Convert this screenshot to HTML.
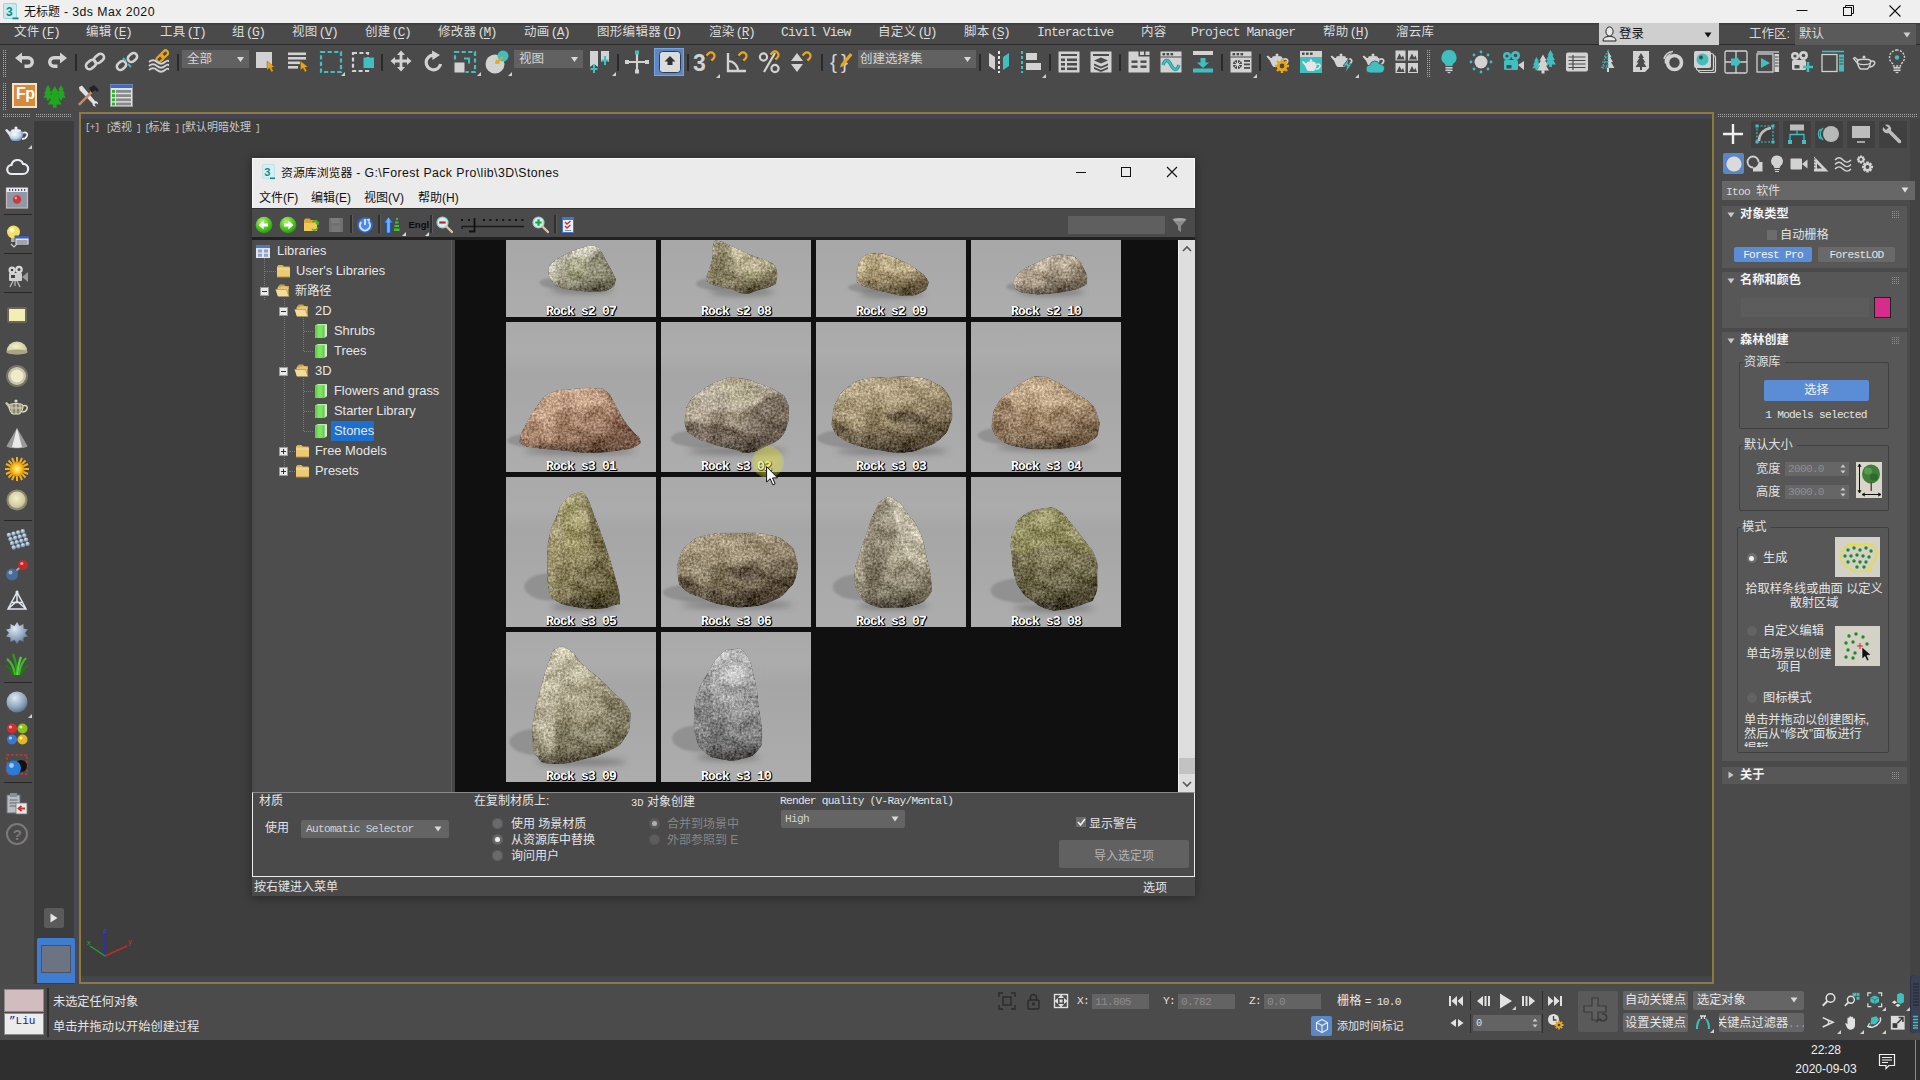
<!DOCTYPE html>
<html lang="zh-CN">
<head>
<meta charset="utf-8">
<title>3ds Max 2020</title>
<style>
*{box-sizing:border-box;margin:0;padding:0}
html,body{width:1920px;height:1080px;overflow:hidden;background:#4a4a4a}
body{position:relative;font-family:"Liberation Sans","Noto Sans CJK SC",sans-serif;font-size:12px;color:#e0e0e0;-webkit-font-smoothing:antialiased}
.a{position:absolute}
.t{position:absolute;white-space:nowrap;line-height:1}
.mono{font-family:"Liberation Mono","Noto Sans CJK SC",monospace}
.cjk{font-family:"Liberation Sans","Noto Sans CJK SC",sans-serif}
svg{position:absolute;overflow:visible}
</style>
</head>
<body>
<!-- main window title bar -->
<div class="a" style="left:0;top:0;width:1920px;height:23px;background:#efefef"></div>
<!-- menu bar -->
<div class="a" style="left:0;top:23px;width:1920px;height:22px;background:linear-gradient(#3c3c3c,#4a4a4a 3px)"></div>
<div class="a" style="left:0;top:44px;width:1920px;height:1px;background:#2a2a2a"></div>
<!-- toolbars -->
<div class="a" style="left:0;top:45px;width:1920px;height:68px;background:#4a4a4a"></div>
<!-- left toolbar -->
<div class="a" style="left:0;top:113px;width:34px;height:871px;background:#4a4a4a"></div>
<div class="a" style="left:34px;top:121px;width:40px;height:863px;background:#3c3c3c"></div>
<div class="a" style="left:74px;top:113px;width:5px;height:871px;background:#49494f"></div>
<!-- viewport -->
<div class="a" style="left:79px;top:112px;width:1635px;height:872px;background:#3e3e3e;border:2px solid #8c7b3c"></div>
<div class="a" style="left:81px;top:114px;width:1631px;height:3px;background:#454259"></div><div class="a" style="left:81px;top:117px;width:1631px;height:2px;background:#3e4a3a"></div>
<div class="a" style="left:81px;top:976px;width:1631px;height:2px;background:#3e4a3a"></div><div class="a" style="left:81px;top:978px;width:1631px;height:4px;background:#454259"></div>
<!-- right panel -->
<div class="a" style="left:1714px;top:112px;width:206px;height:872px;background:#4a4a4a"></div>
<!-- status bar -->
<div class="a" style="left:0;top:984px;width:1920px;height:56px;background:#4b4b4b"></div>
<!-- taskbar -->
<div class="a" style="left:0;top:1040px;width:1920px;height:40px;background:#2f2f2f"></div>
<style>
.mb{font-size:12.500px;color:#dcdcdc}
.mc{font-family:"Liberation Sans","Noto Sans CJK SC",sans-serif;font-size:12.500px;letter-spacing:.300px}
.ml{font-family:"Liberation Mono",monospace;font-size:13px;letter-spacing:-.850px;margin-left:0}
.ml u{text-underline-offset:2px}
.mp{letter-spacing:-1.600px;margin-left:1px}
</style>
<svg width="0" height="0"><defs><pattern id="dots" width="2" height="2" patternUnits="userSpaceOnUse"><rect width="1" height="1" fill="#a8a8a8"/></pattern></defs></svg>
<svg style="left:3px;top:3px" width="17" height="17" viewBox="0 0 17 17"><rect x="0" y="0" width="14" height="16" rx="2" fill="#9fd6da"/><rect x="1" y="1" width="12" height="14" rx="1.500" fill="#c8ecee"/><text x="3" y="12.500" font-family="Liberation Sans,sans-serif" font-weight="bold" font-size="12" fill="#0e8a90">3</text><rect x="9.500" y="14.500" width="6" height="1.800" fill="#0e8a90"/></svg>
<div class="t" style="left:24px;top:6px;font-size:12.300px;color:#111"><span style="font-size:12px">无标题</span><span style="letter-spacing:.45px"> - 3ds Max 2020</span></div>
<svg style="left:1796px;top:5px" width="12" height="12"><path d="M0.500 5.500h11" stroke="#111" stroke-width="1"/></svg>
<svg style="left:1843px;top:5px" width="12" height="12"><rect x="0.500" y="2.500" width="8" height="8" fill="none" stroke="#111"/><path d="M2.500 2.500v-2h8v8h-2" fill="none" stroke="#111"/></svg>
<svg style="left:1889px;top:5px" width="12" height="12"><path d="M0.500 0.500l11 11M11.500 0.500l-11 11" stroke="#111" stroke-width="1.100"/></svg>
<div class="t mb" style="left:14px;top:26px"><span class="mc">文件</span><span class="ml mp">(<u>F</u>)</span></div>
<div class="t mb" style="left:86px;top:26px"><span class="mc">编辑</span><span class="ml mp">(<u>E</u>)</span></div>
<div class="t mb" style="left:160px;top:26px"><span class="mc">工具</span><span class="ml mp">(<u>T</u>)</span></div>
<div class="t mb" style="left:232px;top:26px"><span class="mc">组</span><span class="ml mp">(<u>G</u>)</span></div>
<div class="t mb" style="left:292px;top:26px"><span class="mc">视图</span><span class="ml mp">(<u>V</u>)</span></div>
<div class="t mb" style="left:365px;top:26px"><span class="mc">创建</span><span class="ml mp">(<u>C</u>)</span></div>
<div class="t mb" style="left:438px;top:26px"><span class="mc">修改器</span><span class="ml mp">(<u>M</u>)</span></div>
<div class="t mb" style="left:524px;top:26px"><span class="mc">动画</span><span class="ml mp">(<u>A</u>)</span></div>
<div class="t mb" style="left:597px;top:26px"><span class="mc">图形编辑器</span><span class="ml mp">(<u>D</u>)</span></div>
<div class="t mb" style="left:709px;top:26px"><span class="mc">渲染</span><span class="ml mp">(<u>R</u>)</span></div>
<div class="t mb" style="left:781px;top:26px"><span class="ml">Civil View</span></div>
<div class="t mb" style="left:878px;top:26px"><span class="mc">自定义</span><span class="ml mp">(<u>U</u>)</span></div>
<div class="t mb" style="left:964px;top:26px"><span class="mc">脚本</span><span class="ml mp">(<u>S</u>)</span></div>
<div class="t mb" style="left:1037px;top:26px"><span class="ml">Interactive</span></div>
<div class="t mb" style="left:1141px;top:26px"><span class="mc">内容</span></div>
<div class="t mb" style="left:1191px;top:26px"><span class="ml">Project Manager</span></div>
<div class="t mb" style="left:1323px;top:26px"><span class="mc">帮助</span><span class="ml mp">(<u>H</u>)</span></div>
<div class="t mb" style="left:1396px;top:26px"><span class="mc">溜云库</span></div>
<div class="a" style="left:1599px;top:23px;width:120px;height:22px;background:#cfcfcf"></div>
<svg style="left:1602px;top:26px" width="15" height="16" viewBox="0 0 15 16"><ellipse cx="7.500" cy="5.500" rx="3.600" ry="4.600" fill="#e8e8e8" stroke="#222" stroke-width="1"/><path d="M1 15c0-3.500 3-4.500 6.500-4.500s6.500 1 6.500 4.500Z" fill="#e8e8e8" stroke="#222" stroke-width="1"/></svg>
<div class="t cjk" style="left:1619px;top:28px;font-size:12.500px;color:#111">登录</div>
<svg style="left:1704px;top:32px" width="8" height="6"><path d="M0.500 0.500h7L4 5.500Z" fill="#111"/></svg>
<div class="t cjk" style="left:1749px;top:28px;font-size:12.500px;color:#d8d8d8">工作区:</div>
<div class="a" style="left:1795px;top:24px;width:121px;height:21px;background:#5a5a5a"></div>
<div class="t cjk" style="left:1799px;top:28px;font-size:12.500px;color:#d8d8d8">默认</div>
<svg style="left:1903px;top:32px" width="8" height="6"><path d="M0.500 0.500h7L4 5.500Z" fill="#d0d0d0"/></svg>
<svg style="left:3px;top:50px" width="3" height="27"><rect width="3" height="27" fill="url(#dots)"/></svg>
<svg style="left:3px;top:83px" width="3" height="27"><rect width="3" height="27" fill="url(#dots)"/></svg>
<svg style="left:13.0px;top:50.0px" width="24" height="24" viewBox="0 0 24 24"><path d="M2 8l7-5.500v3.500h6a6 6 0 0 1 0 12h-3.500v-3.500H15a2.500 2.500 0 0 0 0-5H9v4Z" fill="#d2d2d2"/></svg>
<svg style="left:45.0px;top:50.0px" width="24" height="24" viewBox="0 0 24 24"><path d="M22 8l-7-5.500v3.500H9a6 6 0 0 0 0 12h3.500v-3.500H9a2.500 2.500 0 0 1 0-5h6v4Z" fill="#d2d2d2"/></svg>
<div class="a" style="left:75px;top:54px;width:2px;height:17px;background:#2a2a2a"></div>
<svg style="left:83.0px;top:50.0px" width="24" height="24" viewBox="0 0 24 24"><g fill="none" stroke="#d2d2d2" stroke-width="2.600"><rect x="2.500" y="11" width="11" height="7" rx="3.500" transform="rotate(-40 8 14.500)"/><rect x="10.500" y="5" width="11" height="7" rx="3.500" transform="rotate(-40 16 8.500)"/></g></svg>
<svg style="left:115.0px;top:50.0px" width="24" height="24" viewBox="0 0 24 24"><g fill="none" stroke="#d2d2d2" stroke-width="2.600"><rect x="1.500" y="12" width="10" height="7" rx="3.500" transform="rotate(-40 6.500 15.500)"/><rect x="12.500" y="4" width="10" height="7" rx="3.500" transform="rotate(-40 17.500 7.500)"/></g><path d="M8 8l3 3M13 14l3 3" stroke="#3fbfc0" stroke-width="1.800"/></svg>
<svg style="left:147.0px;top:50.0px" width="24" height="24" viewBox="0 0 24 24"><g fill="none" stroke="#e8a51e" stroke-width="2.200"><rect x="9" y="6" width="8" height="5" rx="2.500" transform="rotate(-45 13 8.500)"/><rect x="13.500" y="1.500" width="8" height="5" rx="2.500" transform="rotate(-45 17.500 4)"/></g><g fill="none" stroke="#d2d2d2" stroke-width="2"><path d="M2 12c3-2.500 5-2.500 8 0s5 2.500 8 0 3-1 4-1"/><path d="M2 16c3-2.500 5-2.500 8 0s5 2.500 8 0 3-1 4-1"/><path d="M2 20c3-2.500 5-2.500 8 0s5 2.500 8 0 3-1 4-1"/></g></svg>
<div class="a" style="left:177px;top:54px;width:2px;height:17px;background:#2a2a2a"></div>
<div class="a" style="left:182px;top:50px;width:67px;height:18px;background:#616161"></div><div class="t cjk" style="left:187px;top:53px;font-size:12.500px;color:#d6d6d6">全部</div><svg style="left:237px;top:57px" width="7" height="5"><path d="M0 0h7L3.500 5Z" fill="#d8d8d8"/></svg>
<svg style="left:253.0px;top:50.0px" width="24" height="24" viewBox="0 0 24 24"><rect x="3" y="2" width="16" height="16" fill="#d2d2d2"/><g transform="translate(14,11)"><path d="M0 0l0 9 2.500-2 2 4 1.800-.900-2-3.800 3.200-.300Z" fill="#e8a51e" stroke="#7a5200" stroke-width=".400"/></g></svg>
<svg style="left:286.0px;top:50.0px" width="24" height="24" viewBox="0 0 24 24"><g fill="#d2d2d2"><rect x="2" y="2.500" width="18" height="2.600"/><rect x="2" y="7" width="18" height="2.600"/><rect x="2" y="11.500" width="12" height="2.600"/><rect x="2" y="16" width="10" height="2.600"/></g><g transform="translate(14.500,11)"><path d="M0 0l0 9 2.500-2 2 4 1.800-.900-2-3.800 3.200-.300Z" fill="#e8a51e" stroke="#7a5200" stroke-width=".400"/></g></svg>
<svg style="left:318.5px;top:49.5px" width="24" height="24" viewBox="0 0 24 24"><rect x="2" y="2" width="20" height="20" fill="none" stroke="#3fbfc0" stroke-width="2.200" stroke-dasharray="4.200 2.400"/></svg>
<svg style="left:341px;top:72px" width="4" height="4"><path d="M4 0v4H0Z" fill="#d0d0d0"/></svg>
<svg style="left:351.0px;top:49.5px" width="24" height="24" viewBox="0 0 24 24"><rect x="2" y="3" width="15" height="18" fill="none" stroke="#d2d2d2" stroke-width="2.200" stroke-dasharray="4 2.400"/><rect x="12.500" y="7.500" width="10.500" height="10.500" fill="#3fbfc0"/></svg>
<div class="a" style="left:381px;top:54px;width:2px;height:17px;background:#2a2a2a"></div>
<svg style="left:389.0px;top:49.0px" width="24" height="24" viewBox="0 0 24 24"><path d="M12 1.500l4 4.500h-2.600v4.600H18V8l4.500 4-4.500 4v-2.600h-4.600V18H16l-4 4.500L8 18h2.600v-4.600H6V16l-4.500-4L6 8v2.600h4.600V6H8Z" fill="#d2d2d2"/></svg>
<svg style="left:421.0px;top:50.0px" width="24" height="24" viewBox="0 0 24 24"><path d="M12.500 5.200A7.300 7.300 0 1 0 19.600 14" fill="none" stroke="#d2d2d2" stroke-width="3.200"/><path d="M11 0.500l8 4.500-7.500 5Z" fill="#d2d2d2"/></svg>
<svg style="left:453.0px;top:49.5px" width="24" height="24" viewBox="0 0 24 24"><rect x="2" y="2" width="20" height="20" fill="none" stroke="#3fbfc0" stroke-width="2.200" stroke-dasharray="4.200 2.400"/><rect x="1" y="12" width="11" height="11" fill="#d2d2d2" stroke="#4a4a4a" stroke-width="1"/><path d="M11 8.500h5v5" fill="none" stroke="#3fbfc0" stroke-width="2"/></svg>
<svg style="left:477px;top:72px" width="4" height="4"><path d="M4 0v4H0Z" fill="#d0d0d0"/></svg>
<svg style="left:485.0px;top:50.0px" width="24" height="24" viewBox="0 0 24 24"><circle cx="10" cy="14" r="9.500" fill="#d2d2d2"/><circle cx="18" cy="6" r="5.500" fill="#3fbfc0"/><path d="M10 14l1-5 1.500 1.500L17 6l1.500 1.500-4.500 4.500 1.500 1.500Z" fill="#e8a51e"/></svg>
<svg style="left:508px;top:72px" width="4" height="4"><path d="M4 0v4H0Z" fill="#d0d0d0"/></svg>
<div class="a" style="left:514px;top:50px;width:69px;height:18px;background:#616161"></div><div class="t cjk" style="left:519px;top:53px;font-size:12.500px;color:#d6d6d6">视图</div><svg style="left:571px;top:57px" width="7" height="5"><path d="M0 0h7L3.500 5Z" fill="#d8d8d8"/></svg>
<svg style="left:588.0px;top:50.0px" width="24" height="24" viewBox="0 0 24 24"><path d="M2 1h8v16l-4-3-4 3Z" fill="#d2d2d2"/><path d="M13 1h8v11l-4-3-4 3Z" fill="#d2d2d2"/><path d="M6 14v9M2.500 19h7M17 6v9M13.500 10.500h7" stroke="#3fbfc0" stroke-width="2"/></svg>
<svg style="left:612px;top:72px" width="4" height="4"><path d="M4 0v4H0Z" fill="#d0d0d0"/></svg>
<div class="a" style="left:617px;top:54px;width:2px;height:17px;background:#2a2a2a"></div>
<svg style="left:625.0px;top:50.0px" width="24" height="24" viewBox="0 0 24 24"><path d="M1 12h22M12 4v19" stroke="#d2d2d2" stroke-width="2.200"/><rect x="0" y="10" width="4" height="4" fill="#d2d2d2"/><rect x="20" y="10" width="4" height="4" fill="#d2d2d2"/><rect x="10" y="19.500" width="4" height="4" fill="#d2d2d2"/><rect x="10" y="0.500" width="4" height="4" fill="#3fbfc0"/></svg>
<div class="a" style="left:654px;top:48px;width:30px;height:28px;background:#5b87c6;border:1px solid #7aa4dc"></div>
<svg style="left:657.5px;top:50.0px" width="24" height="24" viewBox="0 0 24 24"><rect x="1.500" y="1.500" width="21" height="21" rx="3" fill="#dcdcdc" stroke="#2f3c50" stroke-width="1"/><path d="M12 6l5.500 5.500h-3V15h-5v-3.500h-3Z" fill="#333"/></svg>
<div class="a" style="left:687px;top:54px;width:2px;height:17px;background:#2a2a2a"></div>
<svg style="left:693.0px;top:50.0px" width="24" height="24" viewBox="0 0 24 24"><text x="0" y="21" font-family="Liberation Sans,sans-serif" font-weight="bold" font-size="23" fill="#d2d2d2">3</text><g transform="translate(13,1)"><g transform="rotate(45 5 5)"><path d="M1.500 9.500V5a3.500 3.500 0 0 1 7 0v4.500" fill="none" stroke="#e8a51e" stroke-width="2.300"/><path d="M0.350 8h2.300v2H0.350ZM7.350 8h2.300v2H7.350Z" fill="#3a3a3a"/></g></g></svg>
<svg style="left:716px;top:74px" width="4" height="4"><path d="M4 0v4H0Z" fill="#d0d0d0"/></svg>
<svg style="left:725.0px;top:50.0px" width="24" height="24" viewBox="0 0 24 24"><path d="M3 3v18h18" fill="none" stroke="#d2d2d2" stroke-width="2.400"/><path d="M3 11a10 10 0 0 1 10 10" fill="none" stroke="#d2d2d2" stroke-width="2.200"/><g transform="translate(13,1)"><g transform="rotate(45 5 5)"><path d="M1.500 9.500V5a3.500 3.500 0 0 1 7 0v4.500" fill="none" stroke="#e8a51e" stroke-width="2.300"/><path d="M0.350 8h2.300v2H0.350ZM7.350 8h2.300v2H7.350Z" fill="#3a3a3a"/></g></g></svg>
<svg style="left:758.0px;top:50.0px" width="24" height="24" viewBox="0 0 24 24"><circle cx="5.500" cy="7" r="3.600" fill="none" stroke="#d2d2d2" stroke-width="2.200"/><circle cx="17" cy="18.500" r="3.600" fill="none" stroke="#d2d2d2" stroke-width="2.200"/><path d="M17 3L6 22" stroke="#d2d2d2" stroke-width="2.200"/><g transform="translate(12,0)"><g transform="rotate(45 5 5)"><path d="M1.500 9.500V5a3.500 3.500 0 0 1 7 0v4.500" fill="none" stroke="#e8a51e" stroke-width="2.300"/><path d="M0.350 8h2.300v2H0.350ZM7.350 8h2.300v2H7.350Z" fill="#3a3a3a"/></g></g></svg>
<svg style="left:789.0px;top:50.0px" width="24" height="24" viewBox="0 0 24 24"><path d="M2 11l6-8 6 8Z" fill="#d2d2d2"/><path d="M2 14l6 8 6-8Z" fill="#d2d2d2"/><g transform="translate(13,1)"><g transform="rotate(45 5 5)"><path d="M1.500 9.500V5a3.500 3.500 0 0 1 7 0v4.500" fill="none" stroke="#e8a51e" stroke-width="2.300"/><path d="M0.350 8h2.300v2H0.350ZM7.350 8h2.300v2H7.350Z" fill="#3a3a3a"/></g></g></svg>
<div class="a" style="left:821px;top:54px;width:2px;height:17px;background:#2a2a2a"></div>
<svg style="left:831.0px;top:50.0px" width="24" height="24" viewBox="0 0 24 24"><text x="-1" y="19" font-family="Liberation Sans,sans-serif" font-size="21" fill="#d2d2d2">{</text><text x="10" y="19" font-family="Liberation Sans,sans-serif" font-size="21" fill="#d2d2d2">}</text><path d="M10 14l9-11 2.500 2-9 11-3.500 1.500Z" fill="#e8a51e"/></svg>
<div class="a" style="left:858px;top:50px;width:118px;height:18px;background:#616161"></div><div class="t cjk" style="left:860px;top:53px;font-size:12.500px;color:#d6d6d6">创建选择集</div><svg style="left:964px;top:57px" width="7" height="5"><path d="M0 0h7L3.500 5Z" fill="#d8d8d8"/></svg>
<div class="a" style="left:979px;top:54px;width:2px;height:17px;background:#2a2a2a"></div>
<svg style="left:987.0px;top:50.0px" width="24" height="24" viewBox="0 0 24 24"><path d="M2 3l6 4v13l-6-4Z" fill="#d2d2d2"/><path d="M22 3l-6 4v13l6-4Z" fill="#3fbfc0"/><path d="M12 1v22" stroke="#e8e8e8" stroke-width="2" stroke-dasharray="3 2"/></svg>
<svg style="left:1019.0px;top:50.0px" width="24" height="24" viewBox="0 0 24 24"><path d="M3 1v22" stroke="#3fbfc0" stroke-width="2" stroke-dasharray="3 2"/><rect x="7" y="3" width="11" height="7" fill="#d2d2d2"/><rect x="7" y="13" width="15" height="7" fill="#d2d2d2"/></svg>
<svg style="left:1042px;top:74px" width="4" height="4"><path d="M4 0v4H0Z" fill="#d0d0d0"/></svg>
<div class="a" style="left:1049px;top:54px;width:2px;height:17px;background:#2a2a2a"></div>
<svg style="left:1057.0px;top:50.0px" width="24" height="24" viewBox="0 0 24 24"><rect x="1.500" y="1.500" width="21" height="21" fill="#d2d2d2"/><g fill="#4a4a4a"><rect x="4" y="4" width="16" height="2"/><rect x="4" y="8.500" width="4" height="2.600"/><rect x="10" y="8.500" width="10" height="2.600"/><rect x="4" y="13" width="4" height="2.600"/><rect x="10" y="13" width="10" height="2.600"/><rect x="4" y="17.500" width="4" height="2.600"/><rect x="10" y="17.500" width="10" height="2.600"/></g></svg>
<svg style="left:1089.0px;top:50.0px" width="24" height="24" viewBox="0 0 24 24"><rect x="1.500" y="1.500" width="21" height="21" fill="#d2d2d2"/><g fill="#4a4a4a"><rect x="4" y="4" width="16" height="2"/><path d="M12 7.500l7 3-7 3-7-3Z"/><path d="M5 13.500l7 3 7-3v2l-7 3-7-3Z"/><path d="M5 17l7 3 7-3v2l-7 3-7-3Z"/></g></svg>
<div class="a" style="left:1119px;top:54px;width:2px;height:17px;background:#2a2a2a"></div>
<svg style="left:1127.0px;top:50.0px" width="24" height="24" viewBox="0 0 24 24"><path d="M1.500 1.500h10v5h11v16h-21Z" fill="#d2d2d2"/><rect x="13" y="1.500" width="4" height="3.500" fill="#d2d2d2"/><rect x="18.500" y="1.500" width="4" height="3.500" fill="#d2d2d2"/><g fill="#4a4a4a"><rect x="4.500" y="10.500" width="6" height="2.400"/><rect x="13.500" y="10.500" width="6" height="2.400"/><rect x="4.500" y="15.500" width="6" height="2.400"/><rect x="13.500" y="15.500" width="6" height="2.400"/></g></svg>
<svg style="left:1159.0px;top:50.0px" width="24" height="24" viewBox="0 0 24 24"><rect x="1.500" y="1.500" width="21" height="21" fill="#d2d2d2"/><g fill="#4a4a4a"><rect x="3.500" y="3" width="2.600" height="2.400"/><rect x="7.500" y="3" width="2.600" height="2.400"/><rect x="11.500" y="3" width="2.600" height="2.400"/><rect x="1.500" y="6.500" width="21" height="1"/></g><path d="M4 15c2-6 5-6 8 0s6 6 8 0" fill="none" stroke="#2a8f90" stroke-width="3.400"/><path d="M4 15c2-6 5-6 8 0s6 6 8 0" fill="none" stroke="#3fbfc0" stroke-width="1.800"/></svg>
<svg style="left:1190.5px;top:50.0px" width="24" height="24" viewBox="0 0 24 24"><rect x="2" y="1" width="20" height="4" fill="#d2d2d2"/><rect x="2" y="18.500" width="20" height="4" fill="#3fbfc0"/><path d="M9.500 8h5v4.500h3.500L12 18l-6-5.500h3.500Z" fill="#3fbfc0"/></svg>
<div class="a" style="left:1221px;top:54px;width:2px;height:17px;background:#2a2a2a"></div>
<svg style="left:1229.0px;top:50.0px" width="24" height="24" viewBox="0 0 24 24"><rect x="1.500" y="1.500" width="21" height="21" fill="#d2d2d2"/><g fill="#4a4a4a"><rect x="3.500" y="3" width="2.600" height="2.400"/><rect x="7.500" y="3" width="2.600" height="2.400"/><rect x="11.500" y="3" width="2.600" height="2.400"/><rect x="1.500" y="6.500" width="21" height="1"/><rect x="15" y="10" width="6" height="1.800"/><rect x="15" y="13.500" width="6" height="1.800"/><rect x="15" y="17" width="6" height="1.800"/></g><circle cx="8.500" cy="14.500" r="4.600" fill="#4a4a4a"/><path d="M5.500 11.500l6 6M11.500 11.500l-6 6M8.500 10v9M4 14.500h9" stroke="#d2d2d2" stroke-width="1"/></svg>
<svg style="left:1253px;top:74px" width="4" height="4"><path d="M4 0v4H0Z" fill="#d0d0d0"/></svg>
<div class="a" style="left:1259px;top:54px;width:2px;height:17px;background:#2a2a2a"></div>
<svg style="left:1266.0px;top:49.0px" width="26" height="26" viewBox="0 0 26 26"><path d="M4.500 9.500c2-1.600 11-1.600 13 0 .600 2.500-1 6.500-3 8.500h-7c-2-2-3.600-6-3-8.500Z" fill="#d2d2d2"/><path d="M5 13L0.500 7.500l1.500-1 4 3.500Z" fill="#d2d2d2"/><path d="M17.500 10.500c3-1.500 5 .500 4 2.500s-3 3-5 3" fill="none" stroke="#d2d2d2" stroke-width="1.700"/><ellipse cx="11" cy="8.300" rx="5" ry="1.300" fill="#d2d2d2"/><circle cx="11" cy="6" r="1.500" fill="#d2d2d2"/><g transform="translate(16,17)"><circle r="5.200" fill="#e8a51e"/><g stroke="#e8a51e" stroke-width="2.400"><path d="M0-7v14M-7 0h14M-5-5l10 10M5-5l-10 10"/></g><circle r="2.400" fill="#4a4a4a"/></g></svg>
<svg style="left:1299.0px;top:50.0px" width="24" height="24" viewBox="0 0 24 24"><rect x="1" y="1" width="22" height="22" fill="#3fbfc0"/><rect x="1" y="1" width="22" height="6" fill="#d2d2d2"/><g fill="#4a4a4a"><rect x="3" y="2.500" width="2.600" height="2.400"/><rect x="7" y="2.500" width="2.600" height="2.400"/><rect x="11" y="2.500" width="2.600" height="2.400"/></g><g transform="translate(2.500,5.500) scale(.860)"><path d="M4.500 9.500c2-1.600 11-1.600 13 0 .600 2.500-1 6.500-3 8.500h-7c-2-2-3.600-6-3-8.500Z" fill="#e6e6e6"/><path d="M5 13L0.500 7.500l1.500-1 4 3.500Z" fill="#e6e6e6"/><path d="M17.500 10.500c3-1.500 5 .500 4 2.500s-3 3-5 3" fill="none" stroke="#e6e6e6" stroke-width="1.700"/><ellipse cx="11" cy="8.300" rx="5" ry="1.300" fill="#e6e6e6"/><circle cx="11" cy="6" r="1.500" fill="#e6e6e6"/></g></svg>
<svg style="left:1330.0px;top:49.0px" width="26" height="26" viewBox="0 0 26 26"><path d="M4.500 9.500c2-1.600 11-1.600 13 0 .600 2.500-1 6.500-3 8.500h-7c-2-2-3.600-6-3-8.500Z" fill="#d2d2d2"/><path d="M5 13L0.500 7.500l1.500-1 4 3.500Z" fill="#d2d2d2"/><path d="M17.500 10.500c3-1.500 5 .500 4 2.500s-3 3-5 3" fill="none" stroke="#d2d2d2" stroke-width="1.700"/><ellipse cx="11" cy="8.300" rx="5" ry="1.300" fill="#d2d2d2"/><circle cx="11" cy="6" r="1.500" fill="#d2d2d2"/><path d="M19 9l-6 8h4l-2 7 7-9h-4Z" fill="#3fbfc0" stroke="#4a4a4a" stroke-width=".800"/></svg>
<svg style="left:1355px;top:74px" width="4" height="4"><path d="M4 0v4H0Z" fill="#d0d0d0"/></svg>
<svg style="left:1362.0px;top:49.0px" width="26" height="26" viewBox="0 0 26 26"><path d="M4.500 9.500c2-1.600 11-1.600 13 0 .600 2.500-1 6.500-3 8.500h-7c-2-2-3.600-6-3-8.500Z" fill="#d2d2d2"/><path d="M5 13L0.500 7.500l1.500-1 4 3.500Z" fill="#d2d2d2"/><path d="M17.500 10.500c3-1.500 5 .500 4 2.500s-3 3-5 3" fill="none" stroke="#d2d2d2" stroke-width="1.700"/><ellipse cx="11" cy="8.300" rx="5" ry="1.300" fill="#d2d2d2"/><circle cx="11" cy="6" r="1.500" fill="#d2d2d2"/><path d="M8 24a4 4 0 0 1 0-8 5 5 0 0 1 9.500-1 4.500 4.500 0 0 1 1 9Z" fill="#3fbfc0" stroke="#4a4a4a" stroke-width=".800"/></svg>
<svg style="left:1395.0px;top:50.0px" width="24" height="24" viewBox="0 0 24 24"><rect x="0.5" y="0.5" width="10" height="10" fill="#d2d2d2"/><path d="M1.5 9.5l3-6 2 4 1.500-2 1.500 4Z" fill="#4a4a4a"/><rect x="13" y="0.5" width="10" height="10" fill="#d2d2d2"/><path d="M14 9.5l3-6 2 4 1.500-2 1.500 4Z" fill="#4a4a4a"/><rect x="0.5" y="13" width="10" height="10" fill="#d2d2d2"/><path d="M1.5 22l3-6 2 4 1.500-2 1.500 4Z" fill="#4a4a4a"/><rect x="13" y="13" width="10" height="10" fill="#d2d2d2"/><path d="M14 22l3-6 2 4 1.500-2 1.500 4Z" fill="#4a4a4a"/></svg>
<svg style="left:1427px;top:50px" width="3" height="27"><rect width="3" height="27" fill="url(#dots)"/></svg>
<svg style="left:1437.0px;top:49.0px" width="24" height="26" viewBox="0 0 24 26"><path d="M12 1a7.500 7.500 0 0 0-4.500 13.500c.800.800 1 1.500 1 2.500h7c0-1 .200-1.700 1-2.500A7.500 7.500 0 0 0 12 1Z" fill="#3fbfc0"/><rect x="8.500" y="18" width="7" height="1.600" fill="#d2d2d2"/><rect x="8.500" y="20.500" width="7" height="1.600" fill="#d2d2d2"/><path d="M10 23h4l-2 1.500Z" fill="#d2d2d2"/></svg>
<svg style="left:1469.0px;top:50.0px" width="24" height="24" viewBox="0 0 24 24"><circle cx="12" cy="12" r="6.500" fill="#d2d2d2"/><g fill="#3fbfc0"><circle cx="12" cy="2" r="1.400"/><circle cx="12" cy="22" r="1.400"/><circle cx="2" cy="12" r="1.400"/><circle cx="22" cy="12" r="1.400"/><circle cx="5" cy="5" r="1.400"/><circle cx="19" cy="5" r="1.400"/><circle cx="5" cy="19" r="1.400"/><circle cx="19" cy="19" r="1.400"/></g></svg>
<svg style="left:1501.0px;top:50.0px" width="24" height="24" viewBox="0 0 24 24"><circle cx="6" cy="6" r="4" fill="#3fbfc0"/><circle cx="14.500" cy="5.500" r="4.500" fill="#3fbfc0"/><circle cx="6" cy="6" r="1.600" fill="#4a4a4a"/><circle cx="14.500" cy="5.500" r="1.800" fill="#4a4a4a"/><rect x="3" y="10" width="14" height="10" rx="1.500" fill="#3fbfc0"/><path d="M17 15l6-4v9Z" fill="#d2d2d2"/><rect x="5.500" y="15" width="5" height="3.500" fill="#4a4a4a"/></svg>
<svg style="left:1533.0px;top:50.0px" width="24" height="24" viewBox="0 0 24 24"><g transform="translate(13,0) scale(0.9)"><path d="M5 0l3.500 6H7l3 5H8l3 5H6.500v3h-3v-3H-1l3-5H0l3-5H1.500Z" fill="#3fbfc0"/></g><g transform="translate(0,7) scale(0.7)"><path d="M5 0l3.500 6H7l3 5H8l3 5H6.500v3h-3v-3H-1l3-5H0l3-5H1.500Z" fill="#3fbfc0"/></g><g transform="translate(5,4.5) scale(1)"><path d="M5 0l3.500 6H7l3 5H8l3 5H6.500v3h-3v-3H-1l3-5H0l3-5H1.500Z" fill="#d2d2d2"/></g></svg>
<svg style="left:1565.0px;top:50.0px" width="24" height="24" viewBox="0 0 24 24"><rect x="1" y="2.500" width="22" height="19" rx="2" fill="#d2d2d2"/><g stroke="#4a4a4a" stroke-width="1.200"><path d="M3.500 7h17M3.500 10.500h17M3.500 14h17M3.500 17.500h17M8 5v15"/></g></svg>
<svg style="left:1596.0px;top:50.0px" width="24" height="24" viewBox="0 0 24 24"><path d="M12 1l3.500 6H14l3 5h-2l3.500 6H12Z" fill="#d2d2d2"/><path d="M12 1L8.500 7H10l-3 5h2L5.500 18H12Z" fill="none" stroke="#3fbfc0" stroke-width="1.200" stroke-dasharray="1.500 1.200"/><g fill="#3fbfc0"><circle cx="10" cy="8" r=".800"/><circle cx="9" cy="12" r=".800"/><circle cx="11" cy="12" r=".800"/><circle cx="8" cy="16" r=".800"/><circle cx="10.500" cy="16" r=".800"/></g><rect x="11" y="18" width="2" height="4" fill="#d2d2d2"/></svg>
<svg style="left:1628.5px;top:50.0px" width="24" height="24" viewBox="0 0 24 24"><path d="M4 1h16v17l-4 4H4Z" fill="#d2d2d2"/><path d="M12 3l3 5h-1.500l3 4.500h-2l3 4.500h-4.500v3h-2v-3H6.500l3-4.500h-2l3-4.500H9Z" fill="#4a4a4a"/></svg>
<svg style="left:1661.5px;top:50.0px" width="24" height="24" viewBox="0 0 24 24"><circle cx="12.500" cy="12.500" r="7" fill="none" stroke="#d2d2d2" stroke-width="3.600"/><path d="M3 14c-1.500-5 2-10 7-11-2.500 2-4 5-4 8Z" fill="#d2d2d2"/><path d="M2 9c1-4 4-7 9-7.500" fill="none" stroke="#d2d2d2" stroke-width="1.600"/></svg>
<svg style="left:1692.5px;top:50.0px" width="24" height="24" viewBox="0 0 24 24"><rect x="5.500" y="5.500" width="17" height="17" rx="2" fill="none" stroke="#d2d2d2" stroke-width="1.200"/><rect x="3.500" y="3.500" width="17" height="17" rx="2" fill="#4a4a4a" stroke="#d2d2d2" stroke-width="1.200"/><rect x="1" y="1" width="17" height="17" rx="2" fill="#d2d2d2"/><circle cx="9.500" cy="9.500" r="6" fill="#3fbfc0"/><circle cx="8" cy="7.500" r="2" fill="#4a4a4a"/></svg>
<svg style="left:1724.0px;top:50.0px" width="24" height="24" viewBox="0 0 24 24"><rect x="1" y="1" width="22" height="22" rx="1.500" fill="none" stroke="#d2d2d2" stroke-width="1.300"/><path d="M12 1v22M1 12h22" stroke="#d2d2d2" stroke-width="1.300"/><path d="M7 8.500h5V6l5 6-5 6v-2.500H7Z" fill="#3fbfc0"/></svg>
<svg style="left:1756.0px;top:50.0px" width="24" height="24" viewBox="0 0 24 24"><rect x="1" y="4" width="16" height="18" fill="none" stroke="#d2d2d2" stroke-width="1.300"/><path d="M1 2h22" stroke="#d2d2d2" stroke-width="1.300"/><path d="M5 8l9 5-9 5Z" fill="#3fbfc0"/><rect x="18.500" y="4" width="4.500" height="18" fill="#d2d2d2"/><path d="M19 7h3.500M19 10h3.500M19 13h3.500M19 16h3.500" stroke="#4a4a4a" stroke-width="1"/></svg>
<svg style="left:1789.0px;top:50.0px" width="24" height="24" viewBox="0 0 24 24"><circle cx="6" cy="6" r="4" fill="#d2d2d2"/><circle cx="14.500" cy="5.500" r="4.500" fill="#d2d2d2"/><circle cx="6" cy="6" r="1.600" fill="#4a4a4a"/><circle cx="14.500" cy="5.500" r="1.800" fill="#4a4a4a"/><rect x="3" y="10" width="14" height="10" rx="1.500" fill="#d2d2d2"/><rect x="5.500" y="15" width="5" height="3.500" fill="#4a4a4a"/><path d="M19 12v10M14 17h10" stroke="#3fbfc0" stroke-width="2.600"/></svg>
<svg style="left:1821.0px;top:50.0px" width="24" height="24" viewBox="0 0 24 24"><path d="M1 1.500h22" stroke="#3fbfc0" stroke-width="1.600"/><rect x="1" y="4.500" width="15" height="17" fill="none" stroke="#d2d2d2" stroke-width="1.300"/><rect x="18" y="4.500" width="5" height="17" fill="#3fbfc0"/><path d="M18.500 8h4M18.500 11h4M18.500 14h4" stroke="#4a4a4a" stroke-width="1"/></svg>
<svg style="left:1853.0px;top:51.0px" width="24" height="22" viewBox="0 0 24 22"><path d="M4.500 9.500c2-1.600 11-1.600 13 0 .600 2.500-1 6.500-3 8.500h-7c-2-2-3.600-6-3-8.500Z" fill="none" stroke="#d2d2d2" stroke-width="1.500"/><path d="M5 13L0.500 7.500l1.500-1 4 3.500" fill="none" stroke="#d2d2d2" stroke-width="1.300"/><path d="M17.500 10.500c3-1.500 5 .500 4 2.500s-3 3-5 3" fill="none" stroke="#d2d2d2" stroke-width="1.500"/><circle cx="11" cy="6" r="1.500" fill="#d2d2d2"/><path d="M5 12.500c3 1.500 9 1.500 12 0" fill="none" stroke="#d2d2d2" stroke-width="1.200"/></svg>
<svg style="left:1885.0px;top:49.0px" width="24" height="26" viewBox="0 0 24 26"><path d="M12 1a7.500 7.500 0 0 0-4.500 13.500c.800.800 1 1.500 1 2.500h7c0-1 .200-1.700 1-2.500A7.500 7.500 0 0 0 12 1Z" fill="none" stroke="#d2d2d2" stroke-width="1.400" stroke-dasharray="2 1.400"/><circle cx="12" cy="8.500" r="2.200" fill="#3fbfc0"/><rect x="8.500" y="18" width="7" height="1.600" fill="#d2d2d2"/><rect x="8.500" y="20.500" width="7" height="1.600" fill="#d2d2d2"/><path d="M10 23h4l-2 1.500Z" fill="#d2d2d2"/></svg>
<div class="a" style="left:12px;top:83px;width:25px;height:25px;background:#d78a3c;border:2px solid #f6e3c8"></div>
<div class="t" style="left:16px;top:86px;font-size:16px;font-weight:bold;color:#fff;font-family:'Liberation Sans',sans-serif;letter-spacing:-.500px">Fp</div>
<svg style="left:43.0px;top:83.0px" width="26" height="26" viewBox="0 0 26 26"><g transform="translate(1,2) scale(0.8)"><path d="M5 0l3.500 6H7l3 5H8l3 5H6.500v3h-3v-3H-1l3-5H0l3-5H1.500Z" fill="#1fa81f"/></g><g transform="translate(14,2) scale(0.8)"><path d="M5 0l3.500 6H7l3 5H8l3 5H6.500v3h-3v-3H-1l3-5H0l3-5H1.500Z" fill="#1fa81f"/></g><g transform="translate(6,3) scale(1.15)"><path d="M5 0l3.500 6H7l3 5H8l3 5H6.500v3h-3v-3H-1l3-5H0l3-5H1.500Z" fill="#1fa81f"/></g></svg>
<svg style="left:76.0px;top:84.0px" width="24" height="24" viewBox="0 0 24 24"><path d="M3 3l3-1.500 13 15.500c2 0 3.500 1.500 3 3.500l-2-1.500-1.500 1.500 1.500 2c-2 .500-3.500-1-3.500-3L3.500 6Z" fill="#e0e0e0"/><path d="M2 20l13-13 1.800 1.800-13 13Z" fill="#c58a6a"/><path d="M13 4l5-3 5 5-2 2-2-2-3 3Z" fill="#222"/></svg>
<svg style="left:109.5px;top:84.0px" width="23" height="23" viewBox="0 0 23 23"><rect x="0.500" y="0.500" width="22" height="22" fill="#e2e2e2" stroke="#9a9a9a"/><rect x="0.500" y="0.500" width="22" height="3.500" fill="#3a6ad0"/><g fill="#8a8a8a"><rect x="6" y="6" width="15" height="2.800"/><rect x="6" y="10.200" width="15" height="2.800"/><rect x="6" y="14.400" width="15" height="2.800"/><rect x="6" y="18.600" width="15" height="2.800"/></g><g fill="#2fb02f"><rect x="2" y="6" width="3" height="2.800"/><rect x="2" y="10.200" width="3" height="2.800"/><rect x="2" y="14.400" width="3" height="2.800"/><rect x="2" y="18.600" width="3" height="2.800"/></g></svg>
<svg style="left:3px;top:114px" width="28" height="3"><rect width="28" height="3" fill="url(#dots)"/></svg>
<svg style="left:36px;top:114px" width="36" height="3"><rect width="36" height="3" fill="url(#dots)"/></svg>
<svg style="left:1718px;top:114px" width="200" height="3"><rect width="200" height="3" fill="url(#dots)"/></svg>
<svg width="0" height="0"><defs><radialGradient id="lgW" cx=".4" cy=".35" r=".7"><stop offset="0" stop-color="#ffffff"/><stop offset=".6" stop-color="#b8cfe6"/><stop offset="1" stop-color="#5f7fa8"/></radialGradient><radialGradient id="lgY" cx=".45" cy=".4" r=".7"><stop offset="0" stop-color="#f4f0c8"/><stop offset=".7" stop-color="#cfcaa0"/><stop offset="1" stop-color="#8a8668"/></radialGradient><radialGradient id="lgB" cx=".4" cy=".3" r=".8"><stop offset="0" stop-color="#dfeaf4"/><stop offset=".6" stop-color="#8aa2ba"/><stop offset="1" stop-color="#4a607a"/></radialGradient><radialGradient id="lgSun" cx=".5" cy=".5" r=".5"><stop offset="0" stop-color="#fff2a0"/><stop offset=".6" stop-color="#f6c21e"/><stop offset="1" stop-color="#d88a08"/></radialGradient></defs></svg>
<svg style="left:4.0px;top:121.0px" width="26" height="26" viewBox="0 0 26 26"><path d="M5 11c2-2 12-2 14 0 .600 3-1 7-3.500 9h-7C6 18 4.400 14 5 11Z" fill="url(#lgW)"/><path d="M5.500 15L1 9l2-1 4 4Z" fill="#dfe9f4"/><path d="M19 12c3-1.500 5 .500 4 3s-3 3-5 3" fill="none" stroke="#e6eef8" stroke-width="1.800"/><ellipse cx="12" cy="9.500" rx="5" ry="1.500" fill="#e8f0fa"/><circle cx="12" cy="7" r="1.600" fill="#e8f0fa"/></svg>
<svg style="left:28px;top:145px" width="4" height="4"><path d="M4 0v4H0Z" fill="#d0d0d0"/></svg>
<svg style="left:4.0px;top:154.0px" width="26" height="26" viewBox="0 0 26 26"><path d="M8 20a4.500 4.500 0 0 1-.500-9 6 6 0 0 1 11.500-1.200 5 5 0 0 1 0 10.200Z" fill="none" stroke="#e8edf4" stroke-width="2.200"/></svg>
<svg style="left:4.0px;top:185.0px" width="26" height="26" viewBox="0 0 26 26"><rect x="2.500" y="3" width="21" height="20" fill="#8f98a8" stroke="#c8b8b8" stroke-width="1.200"/><rect x="2.500" y="3" width="21" height="4" fill="#e8e8ee"/><g fill="#555"><rect x="5" y="4" width="1.200" height="2"/><rect x="8" y="4" width="1.200" height="2"/><rect x="11" y="4" width="1.200" height="2"/><rect x="14" y="4" width="1.200" height="2"/><rect x="17" y="4" width="1.200" height="2"/><rect x="20" y="4" width="1.200" height="2"/></g><circle cx="13" cy="14.500" r="4.200" fill="#c83a3a"/><circle cx="11.800" cy="13" r="1.300" fill="#f0a0a0"/></svg>
<div class="a" style="left:4px;top:214px;width:28px;height:1px;background:#262626"></div>
<svg style="left:4.0px;top:223.0px" width="26" height="26" viewBox="0 0 26 26"><circle cx="9.500" cy="9" r="6.500" fill="#f4e060"/><circle cx="8" cy="7" r="2.500" fill="#fff8c0"/><rect x="7" y="15" width="5" height="4" fill="#b0b0b0"/><rect x="11" y="13" width="14" height="9" fill="#dfe4f0" stroke="#444" stroke-width=".800"/><rect x="11" y="13" width="14" height="2.500" fill="#3a5fc0"/><path d="M12.500 18h11M12.500 20h11" stroke="#666" stroke-width="1"/><path d="M7 21l3 3 3-3" fill="none" stroke="#ccc" stroke-width="1.200"/></svg>
<div class="a" style="left:4px;top:253px;width:28px;height:1px;background:#262626"></div>
<svg style="left:4.0px;top:262.0px" width="26" height="26" viewBox="0 0 26 26"><circle cx="8" cy="8" r="3.500" fill="#d8d8d8"/><circle cx="15" cy="7.500" r="3.800" fill="#d8d8d8"/><circle cx="8" cy="8" r="1.300" fill="#444"/><circle cx="15" cy="7.500" r="1.500" fill="#444"/><rect x="5" y="11" width="13" height="8" rx="1" fill="#d0d0d0"/><path d="M18 15l6-5v10Z" fill="#9a9a9a"/><path d="M9 19l-3 6M13 19l3 6M11 19v5" stroke="#c0c0c0" stroke-width="1.200"/><rect x="7" y="13" width="4" height="3" fill="#444"/></svg>
<div class="a" style="left:4px;top:292px;width:28px;height:1px;background:#262626"></div>
<svg style="left:4.0px;top:302.0px" width="26" height="26" viewBox="0 0 26 26"><rect x="3" y="5" width="20" height="16" rx="2" fill="#6a675a" /><rect x="5" y="7" width="16" height="12" fill="#f2eeb4"/></svg>
<svg style="left:4.0px;top:333.0px" width="26" height="26" viewBox="0 0 26 26"><path d="M2.500 19a10.500 10.500 0 0 1 21 0c0 3-21 3-21 0Z" fill="url(#lgY)"/><ellipse cx="13" cy="19" rx="10.500" ry="2.600" fill="#a8a484"/></svg>
<svg style="left:4.0px;top:363.0px" width="26" height="26" viewBox="0 0 26 26"><circle cx="13" cy="13" r="11" fill="#77746a"/><circle cx="13" cy="13" r="9" fill="#c8c4b0"/><circle cx="13" cy="13" r="6.500" fill="#efebc6"/></svg>
<svg style="left:4.0px;top:395.0px" width="26" height="26" viewBox="0 0 26 26"><path d="M5 10c2-2 12-2 14 0 .600 3-1 7-3.500 9h-7C6 17 4.400 13 5 10Z" fill="#8a8878" stroke="#e8e4c0" stroke-width="1"/><path d="M5.500 14L1 8l2-1 4 4Z" fill="#c8c4a4"/><path d="M19 11c3-1.500 5 .500 4 3s-3 3-5 3" fill="none" stroke="#dcd8b8" stroke-width="1.600"/><circle cx="12" cy="6" r="1.600" fill="#dcd8b8"/><path d="M8 9v10M12 9v10M16 9v10M5 13h14" stroke="#e8e4c0" stroke-width=".800"/></svg>
<svg style="left:4.0px;top:425.0px" width="26" height="26" viewBox="0 0 26 26"><path d="M13 3L2.500 21c0 3 21 3 21 0Z" fill="#9a9a9a"/><path d="M13 3L8 22c2 1 8 1 10 0Z" fill="#e8e8e8"/></svg>
<svg style="left:4.0px;top:456.0px" width="26" height="26" viewBox="0 0 26 26"><g stroke="#f0b020" stroke-width="2"><path d="M13 1v24M1 13h24M4.500 4.500l17 17M21.500 4.500l-17 17M8 2l10 22M18 2L8 24M2 8l22 10M2 18L24 8"/></g><circle cx="13" cy="13" r="7.500" fill="url(#lgSun)"/></svg>
<svg style="left:4.0px;top:487.0px" width="26" height="26" viewBox="0 0 26 26"><circle cx="13" cy="13" r="10.500" fill="#8c8870"/><circle cx="13" cy="13" r="8.500" fill="url(#lgY)"/></svg>
<div class="a" style="left:4px;top:520px;width:28px;height:1px;background:#262626"></div>
<svg style="left:4.0px;top:526.0px" width="26" height="26" viewBox="0 0 26 26"><circle cx="5.0" cy="9.0" r="2.300" fill="url(#lgB)"/><circle cx="9.6" cy="7.8" r="2.300" fill="url(#lgB)"/><circle cx="14.2" cy="6.6" r="2.300" fill="url(#lgB)"/><circle cx="18.8" cy="5.4" r="2.300" fill="url(#lgB)"/><circle cx="6.6" cy="13.2" r="2.300" fill="url(#lgB)"/><circle cx="11.2" cy="12.0" r="2.300" fill="url(#lgB)"/><circle cx="15.8" cy="10.8" r="2.300" fill="url(#lgB)"/><circle cx="20.4" cy="9.6" r="2.300" fill="url(#lgB)"/><circle cx="8.2" cy="17.4" r="2.300" fill="url(#lgB)"/><circle cx="12.8" cy="16.2" r="2.300" fill="url(#lgB)"/><circle cx="17.4" cy="15.0" r="2.300" fill="url(#lgB)"/><circle cx="22.0" cy="13.8" r="2.300" fill="url(#lgB)"/><circle cx="9.8" cy="21.6" r="2.300" fill="url(#lgB)"/><circle cx="14.4" cy="20.4" r="2.300" fill="url(#lgB)"/><circle cx="19.0" cy="19.2" r="2.300" fill="url(#lgB)"/><circle cx="23.6" cy="18.0" r="2.300" fill="url(#lgB)"/></svg>
<svg style="left:4.0px;top:557.0px" width="26" height="26" viewBox="0 0 26 26"><path d="M7 18L19 8" stroke="#aaa" stroke-width="2"/><circle cx="8" cy="17.500" r="6" fill="#4a6a9a"/><circle cx="6.500" cy="15.500" r="2" fill="#9ab4d8"/><circle cx="19" cy="8" r="5" fill="#c02a2a"/><circle cx="17.800" cy="6.500" r="1.600" fill="#f09a9a"/></svg>
<svg style="left:4.0px;top:589.0px" width="26" height="26" viewBox="0 0 26 26"><path d="M13 3L4 20h18ZM13 3v9M4 20l9-8 9 8M7.500 13.500h11" fill="none" stroke="#dfe6f0" stroke-width="1.500"/><circle cx="13" cy="3" r="1.500" fill="#dfe6f0"/></svg>
<svg style="left:4.0px;top:620.0px" width="26" height="26" viewBox="0 0 26 26"><path d="M13 2l2.500 4 4-2 0 4.500 4.500 1-3 3.500 3 3.500-4.500 1 0 4.500-4-2-2.500 4-2.500-4-4 2 0-4.500-4.500-1 3-3.500-3-3.500 4.500-1 0-4.500 4 2Z" fill="url(#lgB)"/></svg>
<svg style="left:4.0px;top:651.0px" width="26" height="26" viewBox="0 0 26 26"><g fill="none" stroke-width="2.200"><path d="M13 24C13 14 11 8 9 3" stroke="#2f9a1a"/><path d="M11 24C10 16 7 11 3 8" stroke="#3fb82a"/><path d="M15 24c1-9 3-13 7-17" stroke="#3fb82a"/><path d="M9 24C8 19 6 16 2 15" stroke="#1f7a10"/><path d="M17 24c1-5 3-8 7-9" stroke="#1f7a10"/><path d="M13 24c1-8 2-13 4-18" stroke="#58d040"/></g></svg>
<div class="a" style="left:4px;top:682px;width:28px;height:1px;background:#262626"></div>
<svg style="left:4.0px;top:689.0px" width="26" height="26" viewBox="0 0 26 26"><circle cx="13" cy="13" r="10.500" fill="url(#lgB)"/></svg>
<svg style="left:28px;top:714px" width="4" height="4"><path d="M4 0v4H0Z" fill="#d0d0d0"/></svg>
<svg style="left:4.0px;top:721.0px" width="26" height="26" viewBox="0 0 26 26"><circle cx="8" cy="7.5" r="5" fill="#d03030"/><circle cx="6.5" cy="6.0" r="1.600" fill="#f8b0b0"/><circle cx="18.5" cy="7.5" r="5" fill="#8ac020"/><circle cx="17.0" cy="6.0" r="1.600" fill="#e0f8a0"/><circle cx="8" cy="18.5" r="5" fill="#3a78d0"/><circle cx="6.5" cy="17.0" r="1.600" fill="#b0d0f8"/><circle cx="18.5" cy="18.5" r="5" fill="#e8b818"/><circle cx="17.0" cy="17.0" r="1.600" fill="#fff0a0"/></svg>
<svg style="left:4.0px;top:752.0px" width="26" height="26" viewBox="0 0 26 26"><rect x="3" y="3" width="20" height="19" fill="none" stroke="#e03030" stroke-width="1.300" stroke-dasharray="2.500 1.800"/><circle cx="17" cy="14" r="6" fill="#111"/><circle cx="9.500" cy="16" r="7.500" fill="#2a7ad8"/><circle cx="7.500" cy="13.500" r="2.400" fill="#9ac8f8"/></svg>
<div class="a" style="left:4px;top:782px;width:28px;height:1px;background:#262626"></div>
<svg style="left:4.0px;top:791.0px" width="26" height="26" viewBox="0 0 26 26"><rect x="3" y="4" width="13" height="18" fill="#b8bcc4" stroke="#6a6e78" stroke-width="1"/><rect x="6" y="2" width="7" height="4" fill="#8a8e98"/><path d="M5.500 9h8M5.500 12h8M5.500 15h8" stroke="#666" stroke-width="1"/><rect x="12" y="12" width="11" height="11" fill="#e8e8e8" stroke="#777" stroke-width=".800"/><path d="M21 17.500h-6M17.500 15l-3 2.500 3 2.500" fill="none" stroke="#d03030" stroke-width="1.800"/></svg>
<svg style="left:4.0px;top:821.0px" width="26" height="26" viewBox="0 0 26 26"><circle cx="13" cy="13" r="10" fill="none" stroke="#7a7a7a" stroke-width="2"/><text x="8.800" y="18.500" font-family="Liberation Sans,sans-serif" font-weight="bold" font-size="15" fill="#7a7a7a">?</text></svg>
<div class="a" style="left:44px;top:908px;width:20px;height:20px;background:#5a5a5a;border-radius:2px"></div>
<svg style="left:50px;top:913px" width="8" height="10"><path d="M0.500 0.500l7 4.500-7 4.500Z" fill="#e4e4e4"/></svg>
<div class="a" style="left:37px;top:938px;width:38px;height:45px;background:#3f7dd0;border-radius:2px 2px 0 0"></div>
<div class="a" style="left:41px;top:945px;width:30px;height:28px;background:#6c7382;border:1px solid #4a5060"></div>
<svg style="left:84px;top:925px" width="50" height="40" viewBox="0 0 50 40"><path d="M21 31V9" stroke="#2a2ad8" stroke-width="1.400"/><path d="M21 31l22-10" stroke="#c82a2a" stroke-width="1.400"/><path d="M21 31L6 21" stroke="#2aa02a" stroke-width="1.400"/><text x="19" y="8" font-size="7" fill="#3a3af0" font-family="Liberation Sans,sans-serif">z</text><text x="3" y="20" font-size="7" fill="#2ab02a" font-family="Liberation Sans,sans-serif">x</text><text x="44" y="19" font-size="7" fill="#d03030" font-family="Liberation Sans,sans-serif">y</text></svg>
<div class="t mono" style="left:85px;top:123px;font-size:9.200px;letter-spacing:-.800px;color:#c8c8c8">[+]</div>
<div class="t" style="left:106px;top:122px;font-size:11px;color:#c8c8c8"><span class="mono" style="font-size:9.200px;letter-spacing:-1.500px">[</span>透视<span class="mono" style="font-size:9.200px;letter-spacing:-1.500px"> ]</span></div>
<div class="t" style="left:144.5px;top:122px;font-size:11px;color:#c8c8c8"><span class="mono" style="font-size:9.200px;letter-spacing:-1.500px">[</span>标准<span class="mono" style="font-size:9.200px;letter-spacing:-1.500px"> ]</span></div>
<div class="t" style="left:181px;top:122px;font-size:11px;color:#c8c8c8"><span class="mono" style="font-size:9.200px;letter-spacing:-1.500px">[</span>默认明暗处理<span class="mono" style="font-size:9.200px;letter-spacing:-1.500px"> ]</span></div>
<div class="a" style="left:1910px;top:119px;width:10px;height:865px;background:#434343;"></div>
<div class="a" style="left:1751px;top:121px;width:28px;height:27px;background:#404040;"></div>
<div class="a" style="left:1783px;top:121px;width:28px;height:27px;background:#404040;"></div>
<div class="a" style="left:1815px;top:121px;width:28px;height:27px;background:#404040;"></div>
<div class="a" style="left:1847px;top:121px;width:28px;height:27px;background:#404040;"></div>
<div class="a" style="left:1879px;top:121px;width:28px;height:27px;background:#404040;"></div>
<svg style="left:1721.0px;top:122.0px" width="24" height="24" viewBox="0 0 24 24"><path d="M12 2v20M2 12h20" stroke="#f0f0f0" stroke-width="2.400"/></svg>
<svg style="left:1753.0px;top:122.0px" width="24" height="24" viewBox="0 0 24 24"><rect x="4" y="4" width="16" height="16" fill="none" stroke="#3fbfc0" stroke-width="1.200" stroke-dasharray="2 1.500"/><g fill="#3fbfc0"><rect x="2.500" y="2.500" width="3" height="3"/><rect x="18.500" y="2.500" width="3" height="3"/><rect x="2.500" y="18.500" width="3" height="3"/><rect x="18.500" y="18.500" width="3" height="3"/></g><path d="M6 19c0-7 5-12 12-13" fill="none" stroke="#bdbdbd" stroke-width="2.600"/></svg>
<svg style="left:1785.0px;top:122.0px" width="24" height="24" viewBox="0 0 24 24"><rect x="5" y="2.500" width="14" height="6" fill="#bdbdbd"/><path d="M12 8.500v4M5 20v-7.500h14V20" fill="none" stroke="#3fbfc0" stroke-width="1.300"/><rect x="3" y="18" width="4" height="4" fill="#3fbfc0"/><rect x="17" y="18" width="4" height="4" fill="#3fbfc0"/></svg>
<svg style="left:1817.0px;top:122.0px" width="24" height="24" viewBox="0 0 24 24"><path d="M6 6a8 8 0 0 0 0 12M3.500 7a7 7 0 0 0 0 10" fill="none" stroke="#3fbfc0" stroke-width="1.300"/><circle cx="14" cy="12" r="8" fill="#b8b8b8"/></svg>
<svg style="left:1849.0px;top:122.0px" width="24" height="24" viewBox="0 0 24 24"><rect x="3" y="4" width="18" height="12" fill="#bdbdbd"/><path d="M8 20h8" stroke="#bdbdbd" stroke-width="1.600"/></svg>
<svg style="left:1881.0px;top:122.0px" width="24" height="24" viewBox="0 0 24 24"><path d="M4 3a4.500 4.500 0 0 1 6 5.500l10 10a1.800 1.800 0 0 1-2.500 2.500l-10-10A4.500 4.500 0 0 1 2 5l3 3 2.500-2.500Z" fill="#bdbdbd"/></svg>
<div class="a" style="left:1723px;top:153px;width:21px;height:21px;background:#5b87c6;border-radius:2px"></div>
<svg style="left:1723.5px;top:153.5px" width="20" height="20" viewBox="0 0 20 20"><circle cx="10" cy="10" r="7.600" fill="#dadada"/></svg>
<svg style="left:1745.0px;top:153.5px" width="20" height="20" viewBox="0 0 20 20"><circle cx="8" cy="8" r="5.500" fill="none" stroke="#d2d2d2" stroke-width="1.800"/><rect x="8" y="8" width="9.500" height="9.500" fill="#d2d2d2"/><path d="M8 8h5.500a5.500 5.500 0 0 1-5.500 5.500Z" fill="#4a4a4a"/></svg>
<svg style="left:1767.0px;top:153.5px" width="20" height="20" viewBox="0 0 20 20"><path d="M10 1.500a5.800 5.800 0 0 0-3.500 10.500c.600.600.800 1.200.800 2h5.400c0-.800.200-1.400.800-2A5.800 5.800 0 0 0 10 1.500Z" fill="#d2d2d2"/><path d="M7.500 15.500h5M8 17.500h4" stroke="#d2d2d2" stroke-width="1.200"/></svg>
<svg style="left:1789.0px;top:153.5px" width="20" height="20" viewBox="0 0 20 20"><rect x="1.500" y="4.500" width="11.500" height="11" rx="1" fill="#d2d2d2"/><path d="M13 10l5.500-4.500v9Z" fill="#d2d2d2"/></svg>
<svg style="left:1811.0px;top:153.5px" width="20" height="20" viewBox="0 0 20 20"><path d="M3 2.500v15h14.500Z" fill="#d2d2d2"/><path d="M6 9.500v5h5Z" fill="#4a4a4a"/><path d="M3 5h1.500M3 8h1.500M3 11h1.500M3 14h1.500" stroke="#444" stroke-width="1"/></svg>
<svg style="left:1833.0px;top:153.5px" width="20" height="20" viewBox="0 0 20 20"><g fill="none" stroke="#d2d2d2" stroke-width="1.600"><path d="M2 6c3-3 5-3 8 0s5 3 8 0"/><path d="M2 10.500c3-3 5-3 8 0s5 3 8 0"/><path d="M2 15c3-3 5-3 8 0s5 3 8 0"/></g></svg>
<svg style="left:1855.0px;top:153.5px" width="20" height="20" viewBox="0 0 20 20"><g transform="translate(6,5.5)"><g stroke="#d2d2d2" stroke-width="2.0"><path d="M0-4.1V4.1M-4.1 0H4.1M-2.8-2.8L2.8 2.8M2.8-2.8L-2.8 2.8"/></g><circle r="2.8" fill="#d2d2d2"/><circle r="1.4" fill="#4a4a4a"/></g><g transform="translate(12.5,13)"><g stroke="#d2d2d2" stroke-width="2.7"><path d="M0-5.5V5.5M-5.5 0H5.5M-3.8-3.8L3.8 3.8M3.8-3.8L-3.8 3.8"/></g><circle r="3.8" fill="#d2d2d2"/><circle r="1.9" fill="#4a4a4a"/></g></svg>
<div class="a" style="left:1722px;top:181px;width:193px;height:19px;background:#676767;"></div>
<div class="t cjk" style="left:1726px;top:185px;color:#dcdcdc"><span class="mono" style="font-size:11.2px;letter-spacing:-.74px">Itoo </span><span style="font-size:12.200px">软件</span></div>
<svg style="left:1901px;top:187px" width="8" height="6"><path d="M0.500 0.500h7L4 5.500Z" fill="#e0e0e0"/></svg>
<div class="a" style="left:1722px;top:206px;width:185px;height:62px;background:#575757;"></div><svg style="left:1727px;top:212px" width="8" height="6"><path d="M0.500 0.500h7L4 5.500Z" fill="#c8c8c8"/></svg><div class="t cjk" style="left:1740px;top:208px;font-size:12.200px;font-weight:bold;color:#f2f2f2">对象类型</div><svg style="left:1892px;top:211px" width="7" height="7"><rect width="7" height="7" fill="url(#dots)" opacity=".7"/></svg>
<div class="a" style="left:1767px;top:230px;width:10px;height:10px;background:#6c6c6c;"></div>
<div class="t cjk" style="left:1780px;top:229px;font-size:12.200px;color:#e0e0e0">自动栅格</div>
<div class="a" style="left:1734px;top:247px;width:78px;height:15px;background:#5b8cd6;border-radius:2px"></div>
<div class="t mono" style="left:1734px;top:250px;width:78px;text-align:center;font-size:11.2px;color:#f4f4f4;letter-spacing:-.74px">Forest Pro</div>
<div class="a" style="left:1818px;top:247px;width:77px;height:15px;background:#696969;border-radius:2px"></div>
<div class="t mono" style="left:1818px;top:250px;width:77px;text-align:center;font-size:11.2px;color:#e4e4e4;letter-spacing:-.74px">ForestLOD</div>
<div class="a" style="left:1722px;top:272px;width:185px;height:56px;background:#575757;"></div><svg style="left:1727px;top:278px" width="8" height="6"><path d="M0.500 0.500h7L4 5.500Z" fill="#c8c8c8"/></svg><div class="t cjk" style="left:1740px;top:274px;font-size:12.200px;font-weight:bold;color:#f2f2f2">名称和颜色</div><svg style="left:1892px;top:277px" width="7" height="7"><rect width="7" height="7" fill="url(#dots)" opacity=".7"/></svg>
<div class="a" style="left:1741px;top:298px;width:128px;height:19px;background:#5c5c5c;"></div>
<div class="a" style="left:1874px;top:297px;width:17px;height:21px;background:#d62c8a;border:1px solid #222"></div>
<div class="a" style="left:1722px;top:332px;width:185px;height:429px;background:#575757;"></div><svg style="left:1727px;top:338px" width="8" height="6"><path d="M0.500 0.500h7L4 5.500Z" fill="#c8c8c8"/></svg><div class="t cjk" style="left:1740px;top:334px;font-size:12.200px;font-weight:bold;color:#f2f2f2">森林创建</div><svg style="left:1892px;top:337px" width="7" height="7"><rect width="7" height="7" fill="url(#dots)" opacity=".7"/></svg>
<div class="a" style="left:1739px;top:362px;width:150px;height:67px;border:1px solid #404040;border-radius:2px"></div><div class="a" style="left:1743px;top:356px;width:42px;height:12px;background:#575757;"></div><div class="t cjk" style="left:1744px;top:356px;font-size:12.200px;color:#e0e0e0">资源库</div>
<div class="a" style="left:1764px;top:380px;width:105px;height:21px;background:#5b8cd6;border-radius:2px"></div>
<div class="t cjk" style="left:1764px;top:384px;width:105px;text-align:center;font-size:12.200px;color:#f4f4f4">选择</div>
<div class="t mono" style="left:1744px;top:410px;width:144px;text-align:center;font-size:11.2px;color:#e4e4e4;letter-spacing:-.74px">1 Models selected</div>
<div class="a" style="left:1739px;top:445px;width:150px;height:66px;border:1px solid #404040;border-radius:2px"></div><div class="a" style="left:1743px;top:439px;width:54px;height:12px;background:#575757;"></div><div class="t cjk" style="left:1744px;top:439px;font-size:12.200px;color:#e0e0e0">默认大小</div>
<div class="t cjk" style="left:1756px;top:463px;font-size:12.200px;color:#e0e0e0">宽度</div>
<div class="a" style="left:1785px;top:462px;width:64px;height:14px;background:#666666;"></div>
<div class="t mono" style="left:1788px;top:464px;font-size:11.2px;color:#8e8e8e;letter-spacing:-.74px">2000.0</div>
<svg style="left:1840px;top:464px" width="6" height="10"><path d="M0.500 3.500h5L3 0.500ZM0.500 6.500h5L3 9.500Z" fill="#c8c8c8"/></svg>
<div class="t cjk" style="left:1756px;top:486px;font-size:12.200px;color:#e0e0e0">高度</div>
<div class="a" style="left:1785px;top:485px;width:64px;height:14px;background:#666666;"></div>
<div class="t mono" style="left:1788px;top:487px;font-size:11.2px;color:#8e8e8e;letter-spacing:-.74px">3000.0</div>
<svg style="left:1840px;top:487px" width="6" height="10"><path d="M0.500 3.500h5L3 0.500ZM0.500 6.500h5L3 9.500Z" fill="#c8c8c8"/></svg>
<div class="a" style="left:1856px;top:462px;width:26px;height:36px;background:#d8d5cb;"></div>
<svg style="left:1856px;top:462px" width="26" height="36" viewBox="0 0 26 36"><ellipse cx="15" cy="12" rx="9" ry="9.500" fill="#3f7f3a"/><ellipse cx="12" cy="9" rx="4" ry="3.500" fill="#5a9a50"/><ellipse cx="18" cy="15" rx="4" ry="3.500" fill="#2f6a2c"/><path d="M14.500 20v9h1.500v-9Z" fill="#6a4a2a"/><path d="M3.500 3v27M2 5l1.500-3L5 5M2 28l1.500 3L5 28" fill="none" stroke="#111" stroke-width="1"/><path d="M7 32.500h17M9 31l-3 1.500 3 1.500M22 31l3 1.500-3 1.500" fill="none" stroke="#111" stroke-width="1"/></svg>
<div class="a" style="left:1737px;top:527px;width:152px;height:226px;border:1px solid #404040;border-radius:2px"></div><div class="a" style="left:1741px;top:521px;width:30px;height:12px;background:#575757;"></div><div class="t cjk" style="left:1742px;top:521px;font-size:12.200px;color:#e0e0e0">模式</div>
<div class="a" style="left:1746.5px;top:553px;width:10px;height:10px;border-radius:50%;background:#707070"></div><div class="a" style="left:1749.0px;top:555.5px;width:5px;height:5px;border-radius:50%;background:#f0f0f0"></div>
<div class="t cjk" style="left:1763px;top:552px;font-size:12.200px;color:#e4e4e4">生成</div>
<div class="a" style="left:1835px;top:537px;width:45px;height:40px;background:#d4d1c6;"></div>
<svg style="left:1835px;top:537px" width="45" height="40" viewBox="0 0 45 40"><path d="M7 15c2-7 10-9 18-7 7-3 15 0 16 6 2 6-2 12-6 15 3 4-2 6-7 5-6 2-12 0-13-3C8 30 4 22 7 15Z" fill="none" stroke="#e8e020" stroke-width="1.300"/><circle cx="13" cy="13" r="1.700" fill="#1f8a2a"/><circle cx="19" cy="11" r="1.700" fill="#1f8a2a"/><circle cx="25" cy="13" r="1.700" fill="#1f8a2a"/><circle cx="31" cy="11" r="1.700" fill="#1f8a2a"/><circle cx="36" cy="14" r="1.700" fill="#1f8a2a"/><circle cx="10" cy="19" r="1.700" fill="#1f8a2a"/><circle cx="16" cy="19" r="1.700" fill="#1f8a2a"/><circle cx="22" cy="18" r="1.700" fill="#1f8a2a"/><circle cx="28" cy="19" r="1.700" fill="#1f8a2a"/><circle cx="34" cy="20" r="1.700" fill="#1f8a2a"/><circle cx="13" cy="25" r="1.700" fill="#1f8a2a"/><circle cx="19" cy="24" r="1.700" fill="#1f8a2a"/><circle cx="25" cy="25" r="1.700" fill="#1f8a2a"/><circle cx="31" cy="25" r="1.700" fill="#1f8a2a"/><circle cx="22" cy="30" r="1.700" fill="#1f8a2a"/><circle cx="29" cy="30" r="1.700" fill="#1f8a2a"/></svg>
<div class="t cjk" style="left:1739px;top:583px;width:150px;text-align:center;font-size:12.200px;color:#e4e4e4">拾取样条线或曲面 以定义</div>
<div class="t cjk" style="left:1739px;top:597px;width:150px;text-align:center;font-size:12.200px;color:#e4e4e4">散射区域</div>
<div class="a" style="left:1746.5px;top:626px;width:10px;height:10px;border-radius:50%;background:#636363"></div>
<div class="t cjk" style="left:1763px;top:625px;font-size:12.200px;color:#e4e4e4">自定义编辑</div>
<div class="t cjk" style="left:1744px;top:648px;width:90px;text-align:center;font-size:12.200px;color:#e4e4e4">单击场景以创建</div>
<div class="t cjk" style="left:1744px;top:661px;width:90px;text-align:center;font-size:12.200px;color:#e4e4e4">项目</div>
<div class="a" style="left:1835px;top:626px;width:45px;height:40px;background:#d4d1c6;"></div>
<svg style="left:1835px;top:626px" width="45" height="40" viewBox="0 0 45 40"><circle cx="14" cy="10" r="1.700" fill="#1f8a2a"/><circle cx="21" cy="8" r="1.700" fill="#1f8a2a"/><circle cx="28" cy="11" r="1.700" fill="#1f8a2a"/><circle cx="11" cy="17" r="1.700" fill="#1f8a2a"/><circle cx="18" cy="16" r="1.700" fill="#1f8a2a"/><circle cx="32" cy="18" r="1.700" fill="#1f8a2a"/><circle cx="13" cy="24" r="1.700" fill="#1f8a2a"/><circle cx="20" cy="27" r="1.700" fill="#1f8a2a"/><circle cx="11" cy="31" r="1.700" fill="#1f8a2a"/><circle cx="18" cy="32" r="1.700" fill="#1f8a2a"/><path d="M22 20h6M25 17v6" stroke="#e02020" stroke-width="1"/><path d="M27 21v12l3-2.500 2 4.500 2-1-2-4.500 4-.500Z" fill="#111" stroke="#fff" stroke-width=".500"/></svg>
<div class="a" style="left:1746.5px;top:692.5px;width:10px;height:10px;border-radius:50%;background:#636363"></div>
<div class="t cjk" style="left:1763px;top:692px;font-size:12.200px;color:#e4e4e4">图标模式</div>
<div class="t cjk" style="left:1744px;top:714px;font-size:12.200px;color:#e4e4e4">单击并拖动以创建图标,</div>
<div class="t cjk" style="left:1744px;top:728px;font-size:12.200px;color:#e4e4e4">然后从“修改”面板进行</div>
<div class="a" style="left:1744px;top:742px;width:60px;height:5px;overflow:hidden"><div class="t cjk" style="left:0;top:0;font-size:12.200px;color:#e4e4e4">编辑</div></div>
<div class="a" style="left:1722px;top:767px;width:185px;height:17px;background:#575757;"></div><svg style="left:1728px;top:771px" width="6" height="8"><path d="M0.500 0.500v7L5.500 4Z" fill="#c8c8c8"/></svg><div class="t cjk" style="left:1740px;top:769px;font-size:12.200px;font-weight:bold;color:#f2f2f2">关于</div><svg style="left:1892px;top:772px" width="7" height="7"><rect width="7" height="7" fill="url(#dots)" opacity=".7"/></svg>
<div class="a" style="left:4px;top:989px;width:40px;height:23px;background:#d3bcc0;border:1px solid #8a8a8a"></div>
<div class="a" style="left:4px;top:1013px;width:40px;height:22px;background:#ececec;border:1px solid #8a8a8a"></div>
<div class="t " style="left:9px;top:1016px;font-size:11px;color:#1a1a8a;font-family:'Liberation Mono',monospace;width:33px;overflow:hidden">”Liu</div>
<div class="a" style="left:47px;top:988px;width:2px;height:49px;background:#2e2e2e;"></div>
<div class="t cjk" style="left:53px;top:996px;font-size:12.200px;color:#e6e6e6">未选定任何对象</div>
<div class="t cjk" style="left:53px;top:1021px;font-size:12.200px;color:#e6e6e6">单击并拖动以开始创建过程</div>
<svg style="left:998.0px;top:992.0px" width="18" height="18" viewBox="0 0 18 18"><rect x="5" y="5" width="8" height="8" fill="none" stroke="#2b2b2b" stroke-width="1.400"/><path d="M1 5V1h4M13 1h4v4M17 13v4h-4M5 17H1v-4" fill="none" stroke="#2b2b2b" stroke-width="1.400"/></svg>
<svg style="left:1025.0px;top:992.0px" width="18" height="18" viewBox="0 0 18 18"><rect x="3" y="8" width="11" height="9" rx="1" fill="none" stroke="#2b2b2b" stroke-width="1.400"/><path d="M5.500 8V5.500a3 3 0 0 1 6 0V8" fill="none" stroke="#2b2b2b" stroke-width="1.400"/><circle cx="8.500" cy="12" r="1.500" fill="#2b2b2b"/></svg>
<svg style="left:1053.0px;top:993.0px" width="16" height="16" viewBox="0 0 16 16"><rect x="1.500" y="1.500" width="13" height="13" fill="none" stroke="#e0e0e0" stroke-width="1.400"/><path d="M8 1.500l3 3.500H5ZM8 14.500l3-3.500H5ZM1.500 8l3.500-3v6ZM14.500 8L11 5v6Z" fill="#e0e0e0"/><rect x="6.500" y="6.500" width="3" height="3" fill="#e0e0e0"/></svg>
<div class="t mono" style="left:1077px;top:996px;font-size:11.2px;letter-spacing:-.74px;color:#e0e0e0">X:</div>
<div class="a" style="left:1092px;top:994px;width:57px;height:15px;background:#636363;"></div>
<div class="t mono" style="left:1095px;top:997px;font-size:11.2px;color:#8c8c8c;letter-spacing:-.74px">11.805</div>
<div class="t mono" style="left:1163px;top:996px;font-size:11.2px;letter-spacing:-.74px;color:#e0e0e0">Y:</div>
<div class="a" style="left:1178px;top:994px;width:57px;height:15px;background:#636363;"></div>
<div class="t mono" style="left:1181px;top:997px;font-size:11.2px;color:#8c8c8c;letter-spacing:-.74px">0.782</div>
<div class="t mono" style="left:1249px;top:996px;font-size:11.2px;letter-spacing:-.74px;color:#e0e0e0">Z:</div>
<div class="a" style="left:1264px;top:994px;width:57px;height:15px;background:#636363;"></div>
<div class="t mono" style="left:1267px;top:997px;font-size:11.2px;color:#8c8c8c;letter-spacing:-.74px">0.0</div>
<div class="t cjk" style="left:1337px;top:995px;font-size:12.200px;color:#e6e6e6">栅格 <span class="mono" style="font-size:11.2px;letter-spacing:-.74px">= 10.0</span></div>
<div class="a" style="left:1311px;top:1016px;width:21px;height:20px;background:#5b87c6;border-radius:2px"></div>
<svg style="left:1313.5px;top:1018.0px" width="16" height="16" viewBox="0 0 16 16"><path d="M8 1.500l5.500 3v7L8 14.500l-5.500-3v-7Z" fill="none" stroke="#e8e8e8" stroke-width="1.200"/><path d="M2.500 4.500L8 7.500l5.500-3M8 7.500v7" fill="none" stroke="#e8e8e8" stroke-width="1.200"/></svg>
<div class="t cjk" style="left:1337px;top:1021px;font-size:11.100px;color:#e6e6e6">添加时间标记</div>
<svg style="left:1448.0px;top:993.0px" width="16" height="16" viewBox="0 0 16 16"><rect x="1" y="3" width="2" height="10" fill="#e2e2e2"/><path d="M9 3v10L3.500 8ZM15 3v10L9.500 8Z" fill="#e2e2e2"/></svg>
<div class="a" style="left:1470px;top:991px;width:1px;height:19px;background:#2e2e2e;"></div>
<svg style="left:1476.0px;top:993.0px" width="16" height="16" viewBox="0 0 16 16"><path d="M7 3v10L1 8Z" fill="#e2e2e2"/><rect x="8.500" y="3" width="2" height="10" fill="#e2e2e2"/><rect x="12" y="3" width="2" height="10" fill="#e2e2e2"/></svg>
<svg style="left:1498.0px;top:993.0px" width="16" height="16" viewBox="0 0 16 16"><path d="M2 0.500v15L14 8Z" fill="#e2e2e2"/></svg>
<svg style="left:1512px;top:1006px" width="4" height="4"><path d="M4 0v4H0Z" fill="#d0d0d0"/></svg>
<svg style="left:1520.0px;top:993.0px" width="16" height="16" viewBox="0 0 16 16"><rect x="2" y="3" width="2" height="10" fill="#e2e2e2"/><rect x="5.500" y="3" width="2" height="10" fill="#e2e2e2"/><path d="M9 3v10l6-5Z" fill="#e2e2e2"/></svg>
<div class="a" style="left:1542px;top:991px;width:1px;height:19px;background:#2e2e2e;"></div>
<svg style="left:1547.0px;top:993.0px" width="16" height="16" viewBox="0 0 16 16"><path d="M1 3v10l5.500-5ZM7 3v10l5.500-5Z" fill="#e2e2e2"/><rect x="13" y="3" width="2" height="10" fill="#e2e2e2"/></svg>
<svg style="left:1449.0px;top:1016.0px" width="16" height="14" viewBox="0 0 16 14"><path d="M7 3v8L1.500 7ZM9 3v8l5.500-4Z" fill="#e2e2e2"/></svg>
<div class="a" style="left:1470px;top:1014px;width:1px;height:19px;background:#2e2e2e;"></div>
<div class="a" style="left:1473px;top:1015px;width:68px;height:16px;background:#636363;"></div>
<div class="t mono" style="left:1476px;top:1018px;font-size:10.400px;color:#e0e0e0">0</div>
<svg style="left:1532px;top:1018px" width="6" height="10"><path d="M0.500 3.500h5L3 0.500ZM0.500 6.500h5L3 9.500Z" fill="#c8c8c8"/></svg>
<div class="a" style="left:1542px;top:1014px;width:1px;height:19px;background:#2e2e2e;"></div>
<svg style="left:1547.0px;top:1013.0px" width="18" height="18" viewBox="0 0 18 18"><circle cx="6.500" cy="6.500" r="5.500" fill="#e0e0e0"/><path d="M6.500 3v4h3" fill="none" stroke="#444" stroke-width="1.300"/><g transform="translate(12,12)"><g stroke="#e8a51e" stroke-width="1.800"><path d="M0-4.500V4.500M-4.500 0H4.500M-3.200-3.200L3.200 3.200M3.200-3.200L-3.200 3.200"/></g><circle r="3" fill="#e8a51e"/><circle r="1.300" fill="#444"/></g></svg>
<div class="a" style="left:1578px;top:991px;width:40px;height:41px;background:#5a5a5a;border-radius:2px"></div>
<svg style="left:1582px;top:995px" width="32" height="32" viewBox="0 0 32 32"><path d="M10 3h6v8h8v6h-8v8h-6v-8H2v-6h8Z" fill="#5f5f5f" stroke="#3a3a3a" stroke-width="1.200"/><g transform="translate(21,22)"><path d="M-1-3a3.500 3.500 0 1 1-2 5l-4 3" fill="none" stroke="#3a3a3a" stroke-width="1.600"/></g></svg>
<div class="a" style="left:1623px;top:991px;width:65px;height:19px;background:#656565;border-radius:2px"></div>
<div class="t cjk" style="left:1623px;top:994px;width:65px;text-align:center;font-size:12.200px;color:#e6e6e6">自动关键点</div>
<div class="a" style="left:1623px;top:1013px;width:65px;height:19px;background:#656565;border-radius:2px"></div>
<div class="t cjk" style="left:1623px;top:1017px;width:65px;text-align:center;font-size:12.200px;color:#e6e6e6">设置关键点</div>
<div class="a" style="left:1693px;top:991px;width:111px;height:19px;background:#656565;border-radius:2px"></div>
<div class="t cjk" style="left:1697px;top:994px;font-size:12.200px;color:#e6e6e6">选定对象</div>
<svg style="left:1790px;top:997px" width="8" height="6"><path d="M0.500 0.500h7L4 5.500Z" fill="#d8d8d8"/></svg>
<svg style="left:1694.0px;top:1013.0px" width="18" height="18" viewBox="0 0 18 18"><path d="M3 16c0-5 1-8 3-10M15 16c0-5-1-8-3-10" fill="none" stroke="#3fbfc0" stroke-width="2"/><path d="M6 3h6M7.500 3v3M10.500 3v3" stroke="#e0e0e0" stroke-width="1.400"/></svg>
<svg style="left:1710px;top:1029px" width="4" height="4"><path d="M4 0v4H0Z" fill="#d0d0d0"/></svg>
<div class="a" style="left:1719px;top:1013px;width:85px;height:19px;background:#656565;border-radius:2px"></div>
<div class="a" style="left:1719px;top:1013px;width:85px;height:19px;overflow:hidden"><div class="t cjk" style="left:-4px;top:4px;font-size:12.200px;color:#e6e6e6">关键点过滤器<span class="mono" style="font-size:10px;color:#aaa">...</span></div></div>
<svg style="left:1821.2px;top:992.2px" width="15.5" height="15.5" viewBox="0 0 18 18"><circle cx="11" cy="7" r="5" fill="none" stroke="#e2e2e2" stroke-width="1.800"/><path d="M7.500 10.500L2 16" stroke="#e2e2e2" stroke-width="2.200"/></svg>
<svg style="left:1844.2px;top:992.2px" width="15.5" height="15.5" viewBox="0 0 18 18"><circle cx="8" cy="9" r="4" fill="none" stroke="#e2e2e2" stroke-width="1.600"/><path d="M5 12L1 16" stroke="#e2e2e2" stroke-width="2"/><rect x="10" y="1" width="4" height="4" fill="#3fbfc0"/><rect x="14.500" y="5.500" width="3.500" height="3.500" fill="#3fbfc0"/><rect x="14.500" y="1" width="3.500" height="3.500" fill="#3fbfc0"/></svg>
<svg style="left:1867.2px;top:992.2px" width="15.5" height="15.5" viewBox="0 0 18 18"><path d="M1 5V1h4M13 1h4v4M17 13v4h-4M5 17H1v-4" fill="none" stroke="#e2e2e2" stroke-width="1.400"/><path d="M9 4l5 2.500v5L9 14l-5-2.500v-5Z" fill="#3fbfc0"/><path d="M4 6.500L9 9l5-2.500M9 9v5" fill="none" stroke="#2a7f80" stroke-width="1"/></svg>
<svg style="left:1882px;top:1007px" width="4" height="4"><path d="M4 0v4H0Z" fill="#d0d0d0"/></svg>
<svg style="left:1891.2px;top:992.2px" width="15.5" height="15.5" viewBox="0 0 18 18"><path d="M11 1l4 2v9l-4 2-4-2V3Z" fill="#3fbfc0"/><path d="M1 12l3-2 3 2-3 2ZM5 15.500l3-2 3 2-3 2Z" fill="#e2e2e2"/></svg>
<svg style="left:1906px;top:1007px" width="4" height="4"><path d="M4 0v4H0Z" fill="#d0d0d0"/></svg>
<svg style="left:1821.2px;top:1015.2px" width="15.5" height="15.5" viewBox="0 0 18 18"><path d="M2 3l12 5.500L2 14" fill="none" stroke="#e2e2e2" stroke-width="1.800"/><path d="M8 6a4 4 0 0 1 0 5" fill="none" stroke="#e2e2e2" stroke-width="1.400"/></svg>
<svg style="left:1837px;top:1030px" width="4" height="4"><path d="M4 0v4H0Z" fill="#d0d0d0"/></svg>
<svg style="left:1844.2px;top:1015.2px" width="15.5" height="15.5" viewBox="0 0 18 18"><path d="M4 9V4a1.100 1.100 0 0 1 2.200 0v4V2.500a1.100 1.100 0 0 1 2.200 0V8 3a1.100 1.100 0 0 1 2.200 0v5.500V5a1.100 1.100 0 0 1 2.200 0v7c0 3-2 5-5 5s-4-1.500-5-4l-1.500-3c1-.800 2-.500 2.700 1Z" fill="#e2e2e2"/></svg>
<svg style="left:1860px;top:1030px" width="4" height="4"><path d="M4 0v4H0Z" fill="#d0d0d0"/></svg>
<svg style="left:1867.2px;top:1015.2px" width="15.5" height="15.5" viewBox="0 0 18 18"><path d="M5 3l6-1.500 3 4-4 5-6 .500Z" fill="#3fbfc0"/><path d="M1 13c3 3 10 1 14-5 1-2 1-4 0-5" fill="none" stroke="#e2e2e2" stroke-width="1.600"/><path d="M3 9.500l-2 3.500 4 .500" fill="none" stroke="#e2e2e2" stroke-width="1.400"/></svg>
<svg style="left:1882px;top:1030px" width="4" height="4"><path d="M4 0v4H0Z" fill="#d0d0d0"/></svg>
<svg style="left:1890.2px;top:1015.2px" width="15.5" height="15.5" viewBox="0 0 18 18"><rect x="1" y="1" width="16" height="16" fill="#dcdcdc"/><rect x="3" y="9.500" width="5.500" height="5.500" fill="#3a3a3a"/><path d="M8.500 9.500l6-6M10 3h5v5" fill="none" stroke="#3a3a3a" stroke-width="1.800"/></svg>
<div class="a" style="left:1910px;top:975px;width:10px;height:58px;background:#3b4154;border-radius:4px 0 0 4px;box-shadow:inset 1px 0 0 #2c3040"></div>
<svg style="left:1913px;top:983px" width="6" height="24"><path d="M0 1h6M0 4h6M0 7h6M0 10h6M0 13h6M0 16h6M0 19h6M0 22h6" stroke="#2a2e3c" stroke-width="1.300"/></svg>
<svg style="left:1913px;top:1015px" width="6" height="14"><path d="M0 1.500h5M0 4.500h5M0 7.500h5M0 10.500h5M0 13h5" stroke="#3fbfc0" stroke-width="1.400"/></svg>
<div class="a" style="left:1915px;top:1040px;width:1px;height:40px;background:#8a8a8a;"></div>
<div class="t " style="left:1796px;top:1044px;width:60px;text-align:center;font-size:12px;color:#f0f0f0;font-family:'Liberation Sans',sans-serif">22:28</div>
<div class="t " style="left:1786px;top:1063px;width:80px;text-align:center;font-size:12px;color:#f0f0f0;font-family:'Liberation Sans',sans-serif">2020-09-03</div>
<svg style="left:1878px;top:1052px" width="18" height="18" viewBox="0 0 18 18"><path d="M1.500 2.500h15v11h-5.500l-3 3v-3H1.500Z" fill="none" stroke="#f0f0f0" stroke-width="1.200"/><path d="M4 5.500h10M4 8h10M4 10.500h6" stroke="#f0f0f0" stroke-width="1"/></svg>
<!-- dialog -->
<style>
#dlg .t{color:#e4e4e4;font-size:12px}
#dlg .tr{font-family:"Liberation Sans","Noto Sans CJK SC",sans-serif;font-size:12.9px;color:#e6e6e6}
.radio{position:absolute;width:11px;height:11px;border-radius:50%;background:#6a6a6a;box-shadow:inset 0 0 0 1px #5a5a5a}
.radio.on::after{content:"";position:absolute;left:3px;top:3px;width:5px;height:5px;border-radius:50%;background:#f0f0f0}
.dd{position:absolute;background:#646464;border-radius:2px}
.sep{position:absolute;width:2px;background:#2f2f2f;box-shadow:1px 0 0 #5a5a5a}
</style>
<div class="a" id="dlg" style="left:252px;top:158px;width:943px;height:738px;background:#4a4a4a;box-shadow:0 1px 9px 1px rgba(0,0,0,.3)">
 <div class="a" style="left:0;top:0;width:943px;height:50px;background:#ebebeb;border:1px solid #fafafa;border-bottom:none"></div>
 <!-- title icon -->
 <svg style="left:9px;top:6px" width="16" height="17" viewBox="0 0 16 17"><rect x="1" y="0" width="13" height="15" rx="2" fill="#bfe3e6"/><rect x="2" y="1" width="11" height="13" rx="1.5" fill="#d6eef0"/><text x="3.2" y="11.5" font-family="Liberation Sans,sans-serif" font-weight="bold" font-size="11" fill="#0e8a90">3</text><rect x="9" y="13.5" width="5" height="1.6" fill="#0e8a90"/></svg>
 <div class="t" style="left:29px;top:9px;font-size:12.3px;color:#111;font-family:'Liberation Sans','Noto Sans CJK SC',sans-serif"><span style="font-size:11.9px">资源库浏览器</span><span style="letter-spacing:.42px"> - G:\Forest Pack Pro\lib\3D\Stones</span></div>
 <!-- window buttons -->
 <svg style="left:823px;top:8px" width="12" height="12"><path d="M1 6.5h10" stroke="#111" stroke-width="1"/></svg>
 <svg style="left:868px;top:8px" width="12" height="12"><rect x="1.5" y="1.5" width="9" height="9" fill="none" stroke="#111" stroke-width="1"/></svg>
 <svg style="left:914px;top:8px" width="12" height="12"><path d="M1 1l10 10M11 1L1 11" stroke="#111" stroke-width="1.1"/></svg>
 <!-- menu -->
 <div class="t" style="left:7px;top:34px;font-size:12px;color:#111">文件(F)</div>
 <div class="t" style="left:59px;top:34px;font-size:12px;color:#111">编辑(E)</div>
 <div class="t" style="left:112px;top:34px;font-size:12px;color:#111">视图(V)</div>
 <div class="t" style="left:166px;top:34px;font-size:12px;color:#111">帮助(H)</div>
 <!-- toolbar -->
 <div class="a" style="left:0;top:50px;width:943px;height:30px;background:#4a4a4a;border-top:1px solid #333"></div>
 <div class="a" style="left:0;top:79px;width:943px;height:3px;background:#212121"></div>
 <div id="dtb"><svg width="0" height="0"><defs><radialGradient id="gball" cx=".4" cy=".3" r=".8"><stop offset="0" stop-color="#b6f07a"/><stop offset=".55" stop-color="#4cc41e"/><stop offset="1" stop-color="#1f8a0a"/></radialGradient><linearGradient id="bup" x1="0" y1="0" x2="1" y2="0"><stop offset="0" stop-color="#1a6fd8"/><stop offset=".5" stop-color="#6fb6ff"/><stop offset="1" stop-color="#1a5fc0"/></linearGradient></defs></svg>
<svg style="left:2.5px;top:57.5px" width="18" height="18" viewBox="0 0 18 18"><circle cx="9" cy="9" r="8.3" fill="url(#gball)"/><path d="M13 7.6H8.6V4.6L3.6 9l5 4.4v-3H13Z" fill="#fff"/></svg>
<svg style="left:26.5px;top:57.5px" width="18" height="18" viewBox="0 0 18 18"><circle cx="9" cy="9" r="8.3" fill="url(#gball)"/><path d="M5 7.6h4.4V4.6l5 4.4-5 4.4v-3H5Z" fill="#fff"/></svg>
<svg style="left:50.5px;top:58.5px" width="18" height="16" viewBox="0 0 18 16"><path d="M1 3l1.5-1.5h4L8 3h6v11H1Z" fill="#d9a838"/><path d="M1 6h11l2 0v8H1Z" fill="#f0c95a"/><path d="M9 5c1-3 5-3 6 0l1.5-.5-1 4-3.5-2 1.5-.6c-.8-1.6-2.5-1.5-3-.2Z" fill="#3db32a"/><path d="M9 12c2 2 5 1 6-1.5" fill="none" stroke="#3db32a" stroke-width="1.6"/></svg>
<svg style="left:77.0px;top:59.5px" width="14" height="14" viewBox="0 0 14 14"><rect width="14" height="14" fill="#707070"/><rect x="2" y="0" width="9" height="5" fill="#7c7c7c"/><rect x="3" y="8" width="8" height="6" fill="#787878"/></svg>
<div class="sep" style="left:98px;top:57px;height:18px"></div>
<div class="sep" style="left:126px;top:57px;height:18px"></div>
<div class="sep" style="left:178px;top:57px;height:18px"></div>
<div class="sep" style="left:302px;top:57px;height:18px"></div>
<svg style="left:103.5px;top:57.5px" width="18" height="18" viewBox="0 0 18 18"><circle cx="9" cy="9" r="8" fill="#2f62c4"/><circle cx="9" cy="9" r="6.5" fill="#4f88e6"/><path d="M5.2 6.2A5 5 0 1 0 12.8 6.2" fill="none" stroke="#cfe0ff" stroke-width="2"/><path d="M9 3v6" stroke="#cfe0ff" stroke-width="2"/><path d="M10.5 3.2l3.6-.6-.8 3.8Z" fill="#cfe0ff"/></svg>
<svg style="left:131.0px;top:57.5px" width="18" height="18" viewBox="0 0 18 18"><path d="M5.5 1L0.5 7h3v10h4V7h3Z" fill="url(#bup)" stroke="#0f4aa8" stroke-width=".6"/><g fill="#3fc02a"><rect x="13" y="2" width="2" height="2"/><rect x="12" y="5.5" width="3.5" height="2"/><rect x="11.5" y="9" width="4.5" height="2"/><rect x="11" y="12.500" width="5.500" height="2.500"/></g></svg>
<svg style="left:150px;top:74px" width="4" height="4"><path d="M4 0v4H0Z" fill="#d8d8d8"/></svg>
<div class="t" style="left:156.5px;top:62px;font-size:9.5px;font-weight:bold;color:#0c0c0c;font-family:'Liberation Sans',sans-serif">Engl</div>
<svg style="left:173px;top:74px" width="4" height="4"><path d="M4 0v4H0Z" fill="#d8d8d8"/></svg>
<svg style="left:184.0px;top:57.5px" width="18" height="18" viewBox="0 0 18 18"><circle cx="6.5" cy="6.5" r="5.5" fill="#cfeff0" stroke="#9fc8cc" stroke-width="1.2"/><path d="M10.5 10.500L16 16" stroke="#d8c8a0" stroke-width="2.4" stroke-linecap="round"/><rect x="3.3" y="5.400" width="6.400" height="2.200" fill="#d0182a"/></svg>
<svg style="left:280.0px;top:57.5px" width="18" height="18" viewBox="0 0 18 18"><circle cx="6.5" cy="6.5" r="5.5" fill="#cfeff0" stroke="#9fc8cc" stroke-width="1.2"/><path d="M10.5 10.500L16 16" stroke="#d8c8a0" stroke-width="2.4" stroke-linecap="round"/><path d="M3.3 5.400h2.100V3.300h2.200v2.100h2.100v2.200H7.600v2.100H5.400V7.600H3.300Z" fill="#18a828"/></svg>
<svg style="left:207px;top:59px" width="68" height="16" viewBox="0 0 68 16"><g fill="#151515"><rect x="2" y="2" width="2" height="2"/><rect x="9" y="2" width="2" height="2"/><rect x="24.0" y="2" width="2" height="2"/><rect x="30.4" y="2" width="2" height="2"/><rect x="36.8" y="2" width="2" height="2"/><rect x="43.2" y="2" width="2" height="2"/><rect x="49.6" y="2" width="2" height="2"/><rect x="56.0" y="2" width="2" height="2"/><rect x="62.4" y="2" width="2" height="2"/></g><path d="M3 9.500h62" stroke="#1a1a1a" stroke-width="1.4"/><path d="M3 9v3" stroke="#1a1a1a" stroke-width="1.4"/><path d="M15.500 1v13.500H10" fill="none" stroke="#111" stroke-width="1.8"/></svg>
<svg style="left:310.0px;top:58.5px" width="12" height="16" viewBox="0 0 12 16"><rect x=".5" y=".5" width="11" height="15" fill="#e8f0ff" stroke="#3a78d8" stroke-width="1"/><rect x=".5" y=".5" width="11" height="2.500" fill="#3a78d8"/><path d="M3 5l2 2 3.500-3M3 9l2 2 3.500-3" fill="none" stroke="#d02a2a" stroke-width="1.400"/><path d="M3 13.500h6" stroke="#8a8a8a" stroke-width="1"/></svg></div><!--/dtb-->
 <!-- search -->
 <div class="a" style="left:816px;top:58px;width:97px;height:18px;background:#5f5f5f"></div>
 <svg style="left:920px;top:59px" width="15" height="16" viewBox="0 0 15 16"><path d="M0.5 2.5Q7.5 0 14.5 2.5L9 9v6l-3-2V9Z" fill="#8a8a8a"/><ellipse cx="7.5" cy="2.6" rx="6.5" ry="1.6" fill="#a5a5a5"/></svg>
 <!-- tree -->
 <div class="a" style="left:2px;top:82px;width:197px;height:552px;background:#4d4d4d"></div>
 <div class="a" style="left:199px;top:82px;width:1px;height:552px;background:#5e5e5e"></div>
 <div class="a" style="left:200px;top:82px;width:3px;height:552px;background:#454545"></div>
 <div id="tree"><div class="a" style="left:12px;top:100px;width:0;height:28px;border-left:1px dotted #777"></div>
<div class="a" style="left:13px;top:113px;width:11px;height:0;border-top:1px dotted #777"></div>
<div class="a" style="left:12px;top:139px;width:0;height:3px;border-left:1px dotted #777"></div>
<div class="a" style="left:32px;top:141px;width:0;height:7px;border-left:1px dotted #777"></div>
<div class="a" style="left:32px;top:159px;width:0;height:49px;border-left:1px dotted #777"></div>
<div class="a" style="left:32px;top:218px;width:0;height:95px;border-left:1px dotted #777"></div>
<div class="a" style="left:51px;top:160px;width:0;height:33px;border-left:1px dotted #777"></div>
<div class="a" style="left:52px;top:173px;width:9px;height:0;border-top:1px dotted #777"></div>
<div class="a" style="left:52px;top:193px;width:9px;height:0;border-top:1px dotted #777"></div>
<div class="a" style="left:51px;top:220px;width:0;height:53px;border-left:1px dotted #777"></div>
<div class="a" style="left:52px;top:233px;width:9px;height:0;border-top:1px dotted #777"></div>
<div class="a" style="left:52px;top:253px;width:9px;height:0;border-top:1px dotted #777"></div>
<div class="a" style="left:52px;top:273px;width:9px;height:0;border-top:1px dotted #777"></div>
<div class="a" style="left:37px;top:293px;width:6px;height:0;border-top:1px dotted #777"></div>
<div class="a" style="left:37px;top:313px;width:6px;height:0;border-top:1px dotted #777"></div>
<svg style="left:4px;top:87px" width="14" height="13" viewBox="0 0 14 13"><rect x="0" y="0" width="14" height="13" fill="#dfe6f2"/><rect x="0" y="0" width="14" height="3" fill="#4a78c8"/><rect x="2" y="4.5" width="4" height="3" fill="#8fa0c0"/><rect x="8" y="4.5" width="4" height="3" fill="#8fa0c0"/><rect x="2" y="8.8" width="4" height="3" fill="#8fa0c0"/><rect x="8" y="8.8" width="4" height="3" fill="#8fa0c0"/></svg>
<div class="t tr" style="left:25px;top:87px">Libraries</div>
<svg style="left:24px;top:106px" width="15" height="14" viewBox="0 0 15 14"><path d="M1 2.5l1.5-1.5h4L8 2.5h5.5v2H1Z" fill="#d9b25c"/><path d="M1 3.5h13v9.5H1Z" fill="#f0d48a"/><path d="M1 6h13v7H1Z" fill="#ecc973"/><path d="M1 13h13" stroke="#b98f3a" stroke-width="1"/></svg>
<div class="t tr" style="left:44px;top:107px">User's Libraries</div>
<svg style="left:8px;top:129px" width="9" height="9" viewBox="0 0 9 9"><rect x="0" y="0" width="9" height="9" fill="#e8e8e8"/><rect x="0.5" y="0.5" width="8" height="8" fill="none" stroke="#9a9a9a"/><path d="M2 4.5h5" stroke="#333" stroke-width="1"/></svg>
<svg style="left:23px;top:125px" width="17" height="15" viewBox="0 0 17 15"><path d="M3 3.5l2-2h4l1.5 1.5H14v3H3Z" fill="#c9a24a"/><path d="M2.5 4.5h3l1-1h5.5l1.5 2v7h-11Z" fill="#e8c878"/><path d="M0.5 6.5h11l2.5 7H3Z" fill="#f4dc9a"/><path d="M0.5 6.5h11l2.5 7" fill="none" stroke="#b98f3a" stroke-width=".7"/></svg>
<div class="t tr" style="left:43px;top:127px"><span style="font-size:12.2px">新路径</span></div>
<svg style="left:27px;top:149px" width="9" height="9" viewBox="0 0 9 9"><rect x="0" y="0" width="9" height="9" fill="#e8e8e8"/><rect x="0.5" y="0.5" width="8" height="8" fill="none" stroke="#9a9a9a"/><path d="M2 4.5h5" stroke="#333" stroke-width="1"/></svg>
<svg style="left:42px;top:145px" width="17" height="15" viewBox="0 0 17 15"><path d="M3 3.5l2-2h4l1.5 1.5H14v3H3Z" fill="#c9a24a"/><path d="M2.5 4.5h3l1-1h5.5l1.5 2v7h-11Z" fill="#e8c878"/><path d="M0.5 6.5h11l2.5 7H3Z" fill="#f4dc9a"/><path d="M0.5 6.5h11l2.5 7" fill="none" stroke="#b98f3a" stroke-width=".7"/></svg>
<div class="t tr" style="left:63px;top:147px">2D</div>
<svg style="left:62px;top:166px" width="14" height="15" viewBox="0 0 14 15"><path d="M1 1.5L4 0h9v12l-3 2H1Z" fill="#3d9a2e"/><path d="M1 1.5h9.5V14H1Z" fill="#63d24a"/><path d="M3.5 1.5h5V14h-5Z" fill="#7fe262"/><path d="M10.5 1.5L13 0v12l-2.5 2Z" fill="#d8e8d0"/><path d="M1 1.5L4 0h9l-2.5 1.5Z" fill="#b6f0a0"/></svg>
<div class="t tr" style="left:82px;top:167px">Shrubs</div>
<svg style="left:62px;top:186px" width="14" height="15" viewBox="0 0 14 15"><path d="M1 1.5L4 0h9v12l-3 2H1Z" fill="#3d9a2e"/><path d="M1 1.5h9.5V14H1Z" fill="#63d24a"/><path d="M3.5 1.5h5V14h-5Z" fill="#7fe262"/><path d="M10.5 1.5L13 0v12l-2.5 2Z" fill="#d8e8d0"/><path d="M1 1.5L4 0h9l-2.5 1.5Z" fill="#b6f0a0"/></svg>
<div class="t tr" style="left:82px;top:187px">Trees</div>
<svg style="left:27px;top:209px" width="9" height="9" viewBox="0 0 9 9"><rect x="0" y="0" width="9" height="9" fill="#e8e8e8"/><rect x="0.5" y="0.5" width="8" height="8" fill="none" stroke="#9a9a9a"/><path d="M2 4.5h5" stroke="#333" stroke-width="1"/></svg>
<svg style="left:42px;top:205px" width="17" height="15" viewBox="0 0 17 15"><path d="M3 3.5l2-2h4l1.5 1.5H14v3H3Z" fill="#c9a24a"/><path d="M2.5 4.5h3l1-1h5.5l1.5 2v7h-11Z" fill="#e8c878"/><path d="M0.5 6.5h11l2.5 7H3Z" fill="#f4dc9a"/><path d="M0.5 6.5h11l2.5 7" fill="none" stroke="#b98f3a" stroke-width=".7"/></svg>
<div class="t tr" style="left:63px;top:207px">3D</div>
<svg style="left:62px;top:226px" width="14" height="15" viewBox="0 0 14 15"><path d="M1 1.5L4 0h9v12l-3 2H1Z" fill="#3d9a2e"/><path d="M1 1.5h9.5V14H1Z" fill="#63d24a"/><path d="M3.5 1.5h5V14h-5Z" fill="#7fe262"/><path d="M10.5 1.5L13 0v12l-2.5 2Z" fill="#d8e8d0"/><path d="M1 1.5L4 0h9l-2.5 1.5Z" fill="#b6f0a0"/></svg>
<div class="t tr" style="left:82px;top:227px">Flowers and grass</div>
<svg style="left:62px;top:246px" width="14" height="15" viewBox="0 0 14 15"><path d="M1 1.5L4 0h9v12l-3 2H1Z" fill="#3d9a2e"/><path d="M1 1.5h9.5V14H1Z" fill="#63d24a"/><path d="M3.5 1.5h5V14h-5Z" fill="#7fe262"/><path d="M10.5 1.5L13 0v12l-2.5 2Z" fill="#d8e8d0"/><path d="M1 1.5L4 0h9l-2.5 1.5Z" fill="#b6f0a0"/></svg>
<div class="t tr" style="left:82px;top:247px">Starter Library</div>
<svg style="left:62px;top:266px" width="14" height="15" viewBox="0 0 14 15"><path d="M1 1.5L4 0h9v12l-3 2H1Z" fill="#3d9a2e"/><path d="M1 1.5h9.5V14H1Z" fill="#63d24a"/><path d="M3.5 1.5h5V14h-5Z" fill="#7fe262"/><path d="M10.5 1.5L13 0v12l-2.5 2Z" fill="#d8e8d0"/><path d="M1 1.5L4 0h9l-2.5 1.5Z" fill="#b6f0a0"/></svg>
<div class="a" style="left:79px;top:263px;width:43px;height:20px;background:#1b6fd0"></div><div class="t tr" style="left:82px;top:267px">Stones</div>
<svg style="left:27px;top:289px" width="9" height="9" viewBox="0 0 9 9"><rect x="0" y="0" width="9" height="9" fill="#e8e8e8"/><rect x="0.5" y="0.5" width="8" height="8" fill="none" stroke="#9a9a9a"/><path d="M2 4.5h5" stroke="#333" stroke-width="1"/><path d="M4.5 2v5" stroke="#333" stroke-width="1"/></svg>
<svg style="left:43px;top:286px" width="15" height="14" viewBox="0 0 15 14"><path d="M1 2.5l1.5-1.5h4L8 2.5h5.5v2H1Z" fill="#d9b25c"/><path d="M1 3.5h13v9.5H1Z" fill="#f0d48a"/><path d="M1 6h13v7H1Z" fill="#ecc973"/><path d="M1 13h13" stroke="#b98f3a" stroke-width="1"/></svg>
<div class="t tr" style="left:63px;top:287px">Free Models</div>
<svg style="left:27px;top:309px" width="9" height="9" viewBox="0 0 9 9"><rect x="0" y="0" width="9" height="9" fill="#e8e8e8"/><rect x="0.5" y="0.5" width="8" height="8" fill="none" stroke="#9a9a9a"/><path d="M2 4.5h5" stroke="#333" stroke-width="1"/><path d="M4.5 2v5" stroke="#333" stroke-width="1"/></svg>
<svg style="left:43px;top:306px" width="15" height="14" viewBox="0 0 15 14"><path d="M1 2.5l1.5-1.5h4L8 2.5h5.5v2H1Z" fill="#d9b25c"/><path d="M1 3.5h13v9.5H1Z" fill="#f0d48a"/><path d="M1 6h13v7H1Z" fill="#ecc973"/><path d="M1 13h13" stroke="#b98f3a" stroke-width="1"/></svg>
<div class="t tr" style="left:63px;top:307px">Presets</div></div><!--/tree-->
 <!-- thumbs panel -->
 <div class="a" style="left:203px;top:82px;width:723px;height:552px;background:#101010"></div>
 <!-- scrollbar -->
 <div class="a" style="left:926px;top:82px;width:17px;height:552px;background:#dedede;border-left:1px solid #f4f4f4"></div>
 <div class="a" style="left:927px;top:600px;width:16px;height:16px;background:#c2c2c2"></div>
 <svg style="left:930px;top:87px" width="10" height="8"><path d="M1 6l4-4 4 4" fill="none" stroke="#555" stroke-width="1.6"/></svg>
 <svg style="left:930px;top:622px" width="10" height="8"><path d="M1 2l4 4 4-4" fill="none" stroke="#555" stroke-width="1.6"/></svg>
 <!-- options group -->
 <div class="a" style="left:0;top:634px;width:943px;height:85px;border:1px solid #ececec;border-top-color:#8a8a8a;background:#4a4a4a"></div>
 <div class="t" style="left:7px;top:637px">材质</div>
 <div class="t" style="left:13px;top:664px">使用</div>
 <div class="dd" style="left:49px;top:662px;width:148px;height:18px"></div>
 <div class="t mono" style="left:54px;top:666px;font-size:11.2px;color:#d2d2d2;letter-spacing:-.74px">Automatic Selector</div>
 <svg style="left:182px;top:668px" width="8" height="6"><path d="M0.5 0.5h7L4 5.5Z" fill="#d8d8d8"/></svg>
 <div class="t" style="left:222px;top:637px">在复制材质上:</div>
 <div class="radio" style="left:240px;top:660px"></div>
 <div class="radio on" style="left:240px;top:676px"></div>
 <div class="radio" style="left:240px;top:692px"></div>
 <div class="t" style="left:259px;top:660px">使用 场景材质</div>
 <div class="t" style="left:259px;top:676px">从资源库中替换</div>
 <div class="t" style="left:259px;top:692px">询问用户</div>
 <div class="t" style="left:379px;top:638px"><span class="mono" style="font-size:10.5px">3D</span> 对象创建</div>
 <div class="radio on" style="left:397px;top:660px;opacity:.6"></div>
 <div class="radio" style="left:397px;top:676px;opacity:.6"></div>
 <div class="t" style="left:415px;top:660px;color:#868686">合并到场景中</div>
 <div class="t" style="left:415px;top:676px;color:#868686;width:72px;overflow:hidden">外部参照到 E</div>
 <div class="t mono" style="left:528px;top:638px;font-size:11.2px;letter-spacing:-.74px">Render quality (V-Ray/Mental)</div>
 <div class="dd" style="left:529px;top:652px;width:124px;height:18px"></div>
 <div class="t mono" style="left:533px;top:656px;font-size:11.2px;color:#d2d2d2;letter-spacing:-.74px">High</div>
 <svg style="left:639px;top:658px" width="8" height="6"><path d="M0.5 0.5h7L4 5.5Z" fill="#d8d8d8"/></svg>
 <div class="a" style="left:824px;top:659px;width:10px;height:10px;background:#6c6c6c"></div>
 <svg style="left:825px;top:660px" width="9" height="8"><path d="M1 4l2.5 3L8 1" fill="none" stroke="#f0f0f0" stroke-width="1.6"/></svg>
 <div class="t" style="left:837px;top:660px">显示警告</div>
 <div class="a" style="left:807px;top:682px;width:130px;height:28px;background:#616161;border-radius:2px"></div>
 <div class="t" style="left:807px;top:692px;width:130px;text-align:center;color:#b4b4b4">导入选定项</div>
 <!-- status -->
 <div class="t" style="left:2px;top:723px">按右键进入菜单</div>
 <div class="t" style="left:891px;top:724px">选项</div>
</div>
<style>.lbl{text-align:center;font-family:"Liberation Mono",monospace;font-weight:bold;font-size:13px;color:#fff;letter-spacing:-.8px;text-shadow:1px 1px 0 #000,1px 0 0 #000,0 1px 0 #000;white-space:pre}</style>
<!-- thumbnails -->
<svg width="0" height="0" style="left:0;top:0"><defs><filter id="tex" x="-5%" y="-5%" width="110%" height="110%" color-interpolation-filters="sRGB"><feTurbulence type="fractalNoise" baseFrequency="0.06 0.08" numOctaves="3" seed="4" result="lo"/><feColorMatrix in="lo" type="matrix" values="1 0 0 0 0  1 0 0 0 0  1 0 0 0 0  0 0 0 0 1" result="lo2"/><feTurbulence type="fractalNoise" baseFrequency="0.42" numOctaves="4" seed="9" result="hi"/><feColorMatrix in="hi" type="matrix" values="0 1 0 0 0  0 1 0 0 0  0 1 0 0 0  0 0 0 0 1" result="hi2"/><feComposite in="SourceGraphic" in2="lo2" operator="arithmetic" k1="0" k2="1" k3="0.32" k4="-0.16" result="b1"/><feComposite in="b1" in2="hi2" operator="arithmetic" k1="0" k2="1" k3="0.5" k4="-0.25" result="b2"/><feComposite in="b2" in2="SourceGraphic" operator="in"/></filter><filter id="blur3" x="-50%" y="-150%" width="200%" height="400%"><feGaussianBlur stdDeviation="3"/></filter><filter id="blur1" x="-60%" y="-60%" width="220%" height="220%"><feGaussianBlur stdDeviation="4"/></filter><filter id="blur2" x="-40%" y="-40%" width="180%" height="180%"><feGaussianBlur stdDeviation="1.1"/></filter><linearGradient id="tbg" x1="0" y1="0" x2="0" y2="1"><stop offset="0" stop-color="#a9a9a9"/><stop offset="0.2" stop-color="#acacac"/><stop offset="0.36" stop-color="#a6a6a6"/><stop offset="1" stop-color="#adadad"/></linearGradient></defs></svg>
<svg style="left:506px;top:240px;overflow:hidden" width="150" height="77" viewBox="0 73 150 77"><defs><linearGradient id="g0" gradientUnits="userSpaceOnUse" x1="66" y1="79" x2="83" y2="125"><stop offset="0" stop-color="#cfccbc"/><stop offset="0.5" stop-color="#a9a58e"/><stop offset="1" stop-color="#77745f"/></linearGradient><clipPath id="c0"><path d="M42.4 104.6C42.4 99.5 42.0 100.1 46.2 95.7C50.5 91.2 51.0 91.7 58.4 87.9C65.9 84.0 66.0 83.6 74.0 81.2C82.0 78.9 82.8 78.1 88.4 79.0C94.1 79.9 91.9 80.4 95.1 84.6C98.4 88.7 97.4 88.6 100.7 94.6C103.9 100.5 105.0 101.4 107.3 106.8C109.7 112.1 110.4 110.5 109.6 114.6C108.7 118.6 109.3 119.2 104.0 121.9C98.7 124.6 98.7 124.1 89.6 124.6C80.4 125.0 79.0 124.5 69.6 123.4C60.1 122.4 60.2 122.9 54.0 120.6C47.8 118.2 49.3 118.8 46.2 114.6C43.1 110.3 42.4 109.6 42.4 104.6Z"/></clipPath></defs><rect x="0" y="0" width="150" height="150" fill="url(#tbg)"/><ellipse cx="53.0" cy="115.9" rx="19.7" ry="5.5" fill="#919192" filter="url(#blur2)"/><ellipse cx="76" cy="123" rx="32" ry="3.5" fill="#4a4a4c" opacity="0.5" filter="url(#blur3)"/><g filter="url(#tex)"><g clip-path="url(#c0)"><path d="M42.4 104.6C42.4 99.5 42.0 100.1 46.2 95.7C50.5 91.2 51.0 91.7 58.4 87.9C65.9 84.0 66.0 83.6 74.0 81.2C82.0 78.9 82.8 78.1 88.4 79.0C94.1 79.9 91.9 80.4 95.1 84.6C98.4 88.7 97.4 88.6 100.7 94.6C103.9 100.5 105.0 101.4 107.3 106.8C109.7 112.1 110.4 110.5 109.6 114.6C108.7 118.6 109.3 119.2 104.0 121.9C98.7 124.6 98.7 124.1 89.6 124.6C80.4 125.0 79.0 124.5 69.6 123.4C60.1 122.4 60.2 122.9 54.0 120.6C47.8 118.2 49.3 118.8 46.2 114.6C43.1 110.3 42.4 109.6 42.4 104.6Z" fill="url(#g0)"/><path d="M42.4 104.6C42.2 101.0 41.2 99.7 46.2 95.7C51.2 91.7 58.9 87.9 67.3 84.6C75.8 81.2 85.3 76.8 88.4 79.0C91.6 81.2 88.4 90.6 82.9 95.7C77.3 100.8 67.8 101.0 60.7 104.6C53.6 108.1 51.0 113.4 47.3 113.4C43.7 113.4 42.7 108.1 42.4 104.6Z" fill="#cfccbc" opacity="0.47" filter="url(#blur2)"/><path d="M82.9 97.9C84.9 92.1 90.2 82.8 95.1 84.6C100.0 86.3 104.4 100.8 107.3 106.8C110.2 112.8 110.2 111.5 109.6 114.6C108.9 117.6 108.0 119.9 104.0 121.9C100.0 123.9 93.3 126.2 89.6 124.6C85.8 122.9 86.4 118.8 85.1 113.4C83.8 108.1 80.9 103.7 82.9 97.9Z" fill="#77745f" opacity="0.54" filter="url(#blur2)"/><path d="M60.7 95.7C62.9 91.2 74.0 89.0 78.4 91.2C82.9 93.4 85.1 102.3 82.9 106.8C80.7 111.2 71.8 115.7 67.3 113.4C62.9 111.2 58.4 100.1 60.7 95.7Z" fill="#6f7a45" opacity="0.24" filter="url(#blur2)"/><ellipse cx="76" cy="127" rx="40" ry="6" fill="#2a2620" opacity="0.5" filter="url(#blur1)"/></g></g></svg>
<div class="t lbl" style="left:506px;top:305px;width:150px">Rock s2 07</div>
<svg style="left:661px;top:240px;overflow:hidden" width="150" height="77" viewBox="0 73 150 77"><defs><linearGradient id="g1" gradientUnits="userSpaceOnUse" x1="70" y1="74" x2="88" y2="127"><stop offset="0" stop-color="#c9c0a2"/><stop offset="0.5" stop-color="#a59c7e"/><stop offset="1" stop-color="#6f674e"/></linearGradient><clipPath id="c1"><path d="M52.3 76.8C54.1 72.2 53.1 73.3 57.9 73.9C62.6 74.5 61.5 75.3 70.1 79.0C78.7 82.7 80.6 84.0 90.1 87.9C99.6 91.7 99.1 90.2 105.7 93.4C112.2 96.7 111.9 94.8 114.6 100.1C117.2 105.4 116.6 108.4 115.7 113.4C114.8 118.5 116.3 116.3 111.2 119.0C106.2 121.7 104.2 121.4 96.8 123.4C89.4 125.5 90.6 127.1 83.4 126.8C76.3 126.5 78.4 124.7 70.1 122.3C61.8 120.0 58.9 120.6 52.3 117.9C45.8 115.2 46.9 116.5 45.7 112.3C44.5 108.2 46.4 108.0 47.9 102.3C49.4 96.7 50.0 98.0 51.2 91.2C52.4 84.4 50.6 81.4 52.3 76.8Z"/></clipPath></defs><rect x="0" y="0" width="150" height="150" fill="url(#tbg)"/><ellipse cx="56.1" cy="116.7" rx="21.0" ry="6.3" fill="#919192" filter="url(#blur2)"/><ellipse cx="81" cy="125" rx="33" ry="3.5" fill="#4a4a4c" opacity="0.5" filter="url(#blur3)"/><g filter="url(#tex)"><g clip-path="url(#c1)"><path d="M52.3 76.8C54.1 72.2 53.1 73.3 57.9 73.9C62.6 74.5 61.5 75.3 70.1 79.0C78.7 82.7 80.6 84.0 90.1 87.9C99.6 91.7 99.1 90.2 105.7 93.4C112.2 96.7 111.9 94.8 114.6 100.1C117.2 105.4 116.6 108.4 115.7 113.4C114.8 118.5 116.3 116.3 111.2 119.0C106.2 121.7 104.2 121.4 96.8 123.4C89.4 125.5 90.6 127.1 83.4 126.8C76.3 126.5 78.4 124.7 70.1 122.3C61.8 120.0 58.9 120.6 52.3 117.9C45.8 115.2 46.9 116.5 45.7 112.3C44.5 108.2 46.4 108.0 47.9 102.3C49.4 96.7 50.0 98.0 51.2 91.2C52.4 84.4 50.6 81.4 52.3 76.8Z" fill="url(#g1)"/><path d="M52.3 76.8C53.7 73.3 54.3 73.4 57.9 73.9C61.4 74.3 66.8 74.6 70.1 79.0C73.4 83.4 75.0 87.4 74.6 95.7C74.1 103.9 72.3 115.7 67.9 120.1C63.4 124.6 56.8 119.4 52.3 117.9C47.9 116.3 45.9 117.7 45.7 112.3C45.4 107.0 49.9 98.3 51.2 91.2C52.6 84.1 51.0 80.2 52.3 76.8Z" fill="#6f674e" opacity="0.47" filter="url(#blur2)"/><path d="M70.1 79.0C73.2 77.0 81.2 83.7 90.1 87.9C99.0 92.1 113.7 96.3 114.6 100.1C115.4 103.9 102.6 107.2 94.6 106.8C86.6 106.3 79.4 103.4 74.6 97.9C69.7 92.3 67.0 81.0 70.1 79.0Z" fill="#c9c0a2" opacity="0.61" filter="url(#blur2)"/><path d="M83.4 102.3C87.9 100.6 102.1 100.1 105.7 102.3C109.2 104.6 105.7 111.7 101.2 113.4C96.8 115.2 87.0 113.4 83.4 111.2C79.9 109.0 79.0 104.1 83.4 102.3Z" fill="#6f7a45" opacity="0.21" filter="url(#blur2)"/><ellipse cx="81" cy="129" rx="42" ry="7" fill="#2a2620" opacity="0.5" filter="url(#blur1)"/></g></g></svg>
<div class="t lbl" style="left:661px;top:305px;width:150px">Rock s2 08</div>
<svg style="left:816px;top:240px;overflow:hidden" width="150" height="77" viewBox="0 73 150 77"><defs><linearGradient id="g2" gradientUnits="userSpaceOnUse" x1="66" y1="86" x2="83" y2="129"><stop offset="0" stop-color="#c4b591"/><stop offset="0.5" stop-color="#a39370"/><stop offset="1" stop-color="#6c5f45"/></linearGradient><clipPath id="c2"><path d="M40.7 111.2C40.4 106.8 40.0 105.7 41.8 100.1C43.6 94.5 42.9 93.8 47.3 90.1C51.8 86.4 51.9 86.9 58.4 86.3C65.0 85.7 64.1 85.7 71.8 87.9C79.5 90.1 79.6 90.7 87.3 94.6C95.0 98.4 94.4 97.9 100.7 102.3C106.9 106.8 107.7 106.8 110.7 111.2C113.6 115.7 113.3 115.1 111.8 119.0C110.3 122.9 111.0 123.1 105.1 125.7C99.2 128.2 98.4 128.6 89.6 128.6C80.7 128.6 81.3 127.6 71.8 125.7C62.3 123.7 61.7 123.6 54.0 121.2C46.3 118.9 46.4 119.4 42.9 116.8C39.3 114.1 41.0 115.7 40.7 111.2Z"/></clipPath></defs><rect x="0" y="0" width="150" height="150" fill="url(#tbg)"/><ellipse cx="52.4" cy="120.5" rx="20.2" ry="5.1" fill="#919192" filter="url(#blur2)"/><ellipse cx="76" cy="127" rx="33" ry="3.5" fill="#4a4a4c" opacity="0.5" filter="url(#blur3)"/><g filter="url(#tex)"><g clip-path="url(#c2)"><path d="M40.7 111.2C40.4 106.8 40.0 105.7 41.8 100.1C43.6 94.5 42.9 93.8 47.3 90.1C51.8 86.4 51.9 86.9 58.4 86.3C65.0 85.7 64.1 85.7 71.8 87.9C79.5 90.1 79.6 90.7 87.3 94.6C95.0 98.4 94.4 97.9 100.7 102.3C106.9 106.8 107.7 106.8 110.7 111.2C113.6 115.7 113.3 115.1 111.8 119.0C110.3 122.9 111.0 123.1 105.1 125.7C99.2 128.2 98.4 128.6 89.6 128.6C80.7 128.6 81.3 127.6 71.8 125.7C62.3 123.7 61.7 123.6 54.0 121.2C46.3 118.9 46.4 119.4 42.9 116.8C39.3 114.1 41.0 115.7 40.7 111.2Z" fill="url(#g2)"/><path d="M41.8 100.1C39.1 97.7 44.0 92.9 47.3 90.1C50.7 87.4 53.6 86.8 58.4 86.3C63.3 85.9 63.3 84.7 71.8 87.9C80.2 91.1 98.4 99.0 100.7 102.3C102.9 105.7 90.9 104.6 82.9 104.6C74.9 104.6 68.9 103.2 60.7 102.3C52.4 101.4 44.4 102.6 41.8 100.1Z" fill="#c4b591" opacity="0.54" filter="url(#blur2)"/><path d="M40.7 111.2C44.2 110.6 50.9 111.7 60.7 113.4C70.4 115.2 79.3 119.0 89.6 120.1C99.8 121.2 108.7 117.9 111.8 119.0C114.9 120.1 109.6 123.8 105.1 125.7C100.7 127.6 96.2 128.6 89.6 128.6C82.9 128.6 78.9 127.1 71.8 125.7C64.7 124.2 59.8 123.0 54.0 121.2C48.2 119.4 45.6 118.8 42.9 116.8C40.2 114.8 37.1 111.9 40.7 111.2Z" fill="#6c5f45" opacity="0.61" filter="url(#blur2)"/><ellipse cx="76" cy="131" rx="43" ry="5" fill="#2a2620" opacity="0.5" filter="url(#blur1)"/></g></g></svg>
<div class="t lbl" style="left:816px;top:305px;width:150px">Rock s2 09</div>
<svg style="left:971px;top:240px;overflow:hidden" width="150" height="77" viewBox="0 73 150 77"><defs><linearGradient id="g3" gradientUnits="userSpaceOnUse" x1="69" y1="88" x2="87" y2="127"><stop offset="0" stop-color="#c9bda9"/><stop offset="0.5" stop-color="#a99b86"/><stop offset="1" stop-color="#75695a"/></linearGradient><clipPath id="c3"><path d="M43.0 116.8C42.4 113.2 42.1 114.0 44.6 110.1C47.0 106.3 46.7 106.2 52.3 102.3C58.0 98.5 58.6 99.1 65.7 95.7C72.8 92.2 71.3 91.5 79.0 89.4C86.7 87.4 87.4 87.4 94.6 87.9C101.7 88.4 100.6 87.4 105.7 91.2C110.7 95.1 110.6 96.4 113.4 102.3C116.3 108.3 116.9 108.7 116.3 113.4C115.7 118.2 117.0 117.1 111.2 120.1C105.4 123.1 104.9 122.7 94.6 124.6C84.2 126.5 82.4 126.7 72.3 127.2C62.3 127.7 63.6 127.3 56.8 126.3C50.0 125.3 50.5 126.0 46.8 123.4C43.1 120.9 43.6 120.3 43.0 116.8Z"/></clipPath></defs><rect x="0" y="0" width="150" height="150" fill="url(#tbg)"/><ellipse cx="55.6" cy="119.7" rx="20.4" ry="5.0" fill="#919192" filter="url(#blur2)"/><ellipse cx="80" cy="125" rx="34" ry="3.5" fill="#4a4a4c" opacity="0.5" filter="url(#blur3)"/><g filter="url(#tex)"><g clip-path="url(#c3)"><path d="M43.0 116.8C42.4 113.2 42.1 114.0 44.6 110.1C47.0 106.3 46.7 106.2 52.3 102.3C58.0 98.5 58.6 99.1 65.7 95.7C72.8 92.2 71.3 91.5 79.0 89.4C86.7 87.4 87.4 87.4 94.6 87.9C101.7 88.4 100.6 87.4 105.7 91.2C110.7 95.1 110.6 96.4 113.4 102.3C116.3 108.3 116.9 108.7 116.3 113.4C115.7 118.2 117.0 117.1 111.2 120.1C105.4 123.1 104.9 122.7 94.6 124.6C84.2 126.5 82.4 126.7 72.3 127.2C62.3 127.7 63.6 127.3 56.8 126.3C50.0 125.3 50.5 126.0 46.8 123.4C43.1 120.9 43.6 120.3 43.0 116.8Z" fill="url(#g3)"/><path d="M52.3 102.3C53.7 99.8 70.6 92.3 79.0 89.4C87.4 86.6 89.2 87.5 94.6 87.9C99.9 88.2 105.7 88.8 105.7 91.2C105.7 93.7 101.2 97.9 94.6 100.1C87.9 102.3 80.8 101.9 72.3 102.3C63.9 102.8 51.0 104.9 52.3 102.3Z" fill="#c9bda9" opacity="0.54" filter="url(#blur2)"/><path d="M79.0 100.1C82.1 97.9 88.3 98.3 90.1 102.3C91.9 106.3 91.0 117.9 87.9 120.1C84.8 122.3 76.3 117.4 74.6 113.4C72.8 109.4 75.9 102.3 79.0 100.1Z" fill="#75695a" opacity="0.47" filter="url(#blur2)"/><path d="M43.0 116.8C45.9 116.3 50.9 120.3 61.2 121.2C71.5 122.1 83.5 122.8 94.6 121.2C105.6 119.7 113.0 113.7 116.3 113.4C119.7 113.2 115.6 117.9 111.2 120.1C106.9 122.3 102.3 123.1 94.6 124.6C86.8 126.0 79.9 126.9 72.3 127.2C64.8 127.6 61.9 127.1 56.8 126.3C51.7 125.6 49.5 125.4 46.8 123.4C44.0 121.5 40.1 117.2 43.0 116.8Z" fill="#75695a" opacity="0.54" filter="url(#blur2)"/><ellipse cx="80" cy="129" rx="44" ry="5" fill="#2a2620" opacity="0.5" filter="url(#blur1)"/></g></g></svg>
<div class="t lbl" style="left:971px;top:305px;width:150px">Rock s2 10</div>
<svg style="left:506px;top:322px;overflow:hidden" width="150" height="150" viewBox="0 0 150 150"><defs><linearGradient id="g4" gradientUnits="userSpaceOnUse" x1="56" y1="66" x2="86" y2="131"><stop offset="0" stop-color="#c9a88e"/><stop offset="0.5" stop-color="#a6836b"/><stop offset="1" stop-color="#7b5d4b"/></linearGradient><clipPath id="c4"><path d="M14.0 116.2C14.9 110.3 15.9 109.6 20.7 100.7C25.4 91.8 25.3 90.9 31.8 82.9C38.3 74.9 35.6 74.9 45.1 70.7C54.6 66.4 55.5 68.1 67.3 66.9C79.2 65.7 80.7 65.5 89.6 66.2C98.4 66.9 95.3 65.1 100.7 69.6C106.0 74.0 104.8 75.2 109.6 82.9C114.3 90.6 113.7 91.3 118.4 98.4C123.2 105.6 123.2 104.5 127.3 109.6C131.5 114.6 133.1 113.5 134.0 117.3C134.9 121.2 136.0 121.0 130.7 124.0C125.3 127.0 126.7 126.7 114.0 128.4C101.3 130.2 98.3 130.7 82.9 130.7C67.5 130.7 69.9 129.6 56.2 128.4C42.6 127.3 42.1 127.7 31.8 126.2C21.4 124.7 22.1 125.6 17.3 122.9C12.6 120.2 13.1 122.1 14.0 116.2Z"/></clipPath></defs><rect x="0" y="0" width="150" height="150" fill="url(#tbg)"/><ellipse cx="34.6" cy="118.4" rx="33.4" ry="7.7" fill="#919192" filter="url(#blur2)"/><ellipse cx="74" cy="129" rx="56" ry="3.5" fill="#4a4a4c" opacity="0.5" filter="url(#blur3)"/><g filter="url(#tex)"><g clip-path="url(#c4)"><path d="M14.0 116.2C14.9 110.3 15.9 109.6 20.7 100.7C25.4 91.8 25.3 90.9 31.8 82.9C38.3 74.9 35.6 74.9 45.1 70.7C54.6 66.4 55.5 68.1 67.3 66.9C79.2 65.7 80.7 65.5 89.6 66.2C98.4 66.9 95.3 65.1 100.7 69.6C106.0 74.0 104.8 75.2 109.6 82.9C114.3 90.6 113.7 91.3 118.4 98.4C123.2 105.6 123.2 104.5 127.3 109.6C131.5 114.6 133.1 113.5 134.0 117.3C134.9 121.2 136.0 121.0 130.7 124.0C125.3 127.0 126.7 126.7 114.0 128.4C101.3 130.2 98.3 130.7 82.9 130.7C67.5 130.7 69.9 129.6 56.2 128.4C42.6 127.3 42.1 127.7 31.8 126.2C21.4 124.7 22.1 125.6 17.3 122.9C12.6 120.2 13.1 122.1 14.0 116.2Z" fill="url(#g4)"/><path d="M31.8 82.9C32.2 78.7 33.6 74.0 45.1 70.7C56.7 67.3 78.4 66.4 89.6 66.2C100.7 66.0 97.6 66.2 100.7 69.6C103.8 72.9 110.9 79.8 105.1 82.9C99.3 86.0 84.2 83.3 71.8 85.1C59.3 86.9 50.9 92.2 42.9 91.8C34.9 91.3 31.3 87.1 31.8 82.9Z" fill="#c9a88e" opacity="0.54" filter="url(#blur2)"/><path d="M14.0 116.2C22.7 115.8 36.7 120.4 60.7 120.7C84.7 120.9 120.0 116.7 134.0 117.3C148.0 118.0 134.7 121.8 130.7 124.0C126.7 126.2 123.6 127.1 114.0 128.4C104.4 129.8 94.4 130.7 82.9 130.7C71.3 130.7 66.4 129.3 56.2 128.4C46.0 127.6 39.6 127.3 31.8 126.2C24.0 125.1 20.9 124.9 17.3 122.9C13.8 120.9 5.3 116.7 14.0 116.2Z" fill="#7b5d4b" opacity="0.61" filter="url(#blur2)"/><path d="M100.7 69.6C101.6 67.8 104.2 74.9 109.6 82.9C114.9 90.9 122.4 102.7 127.3 109.6C132.2 116.4 136.7 116.4 134.0 117.3C131.3 118.2 119.8 119.1 114.0 114.0C108.2 108.9 107.8 100.7 105.1 91.8C102.4 82.9 99.8 71.3 100.7 69.6Z" fill="#7b5d4b" opacity="0.34" filter="url(#blur2)"/><ellipse cx="74" cy="134" rx="72" ry="8" fill="#2a2620" opacity="0.5" filter="url(#blur1)"/></g></g></svg>
<div class="t lbl" style="left:506px;top:460px;width:150px">Rock s3 01</div>
<svg style="left:661px;top:322px;overflow:hidden" width="150" height="150" viewBox="0 0 150 150"><defs><linearGradient id="g5" gradientUnits="userSpaceOnUse" x1="61" y1="56" x2="87" y2="131"><stop offset="0" stop-color="#c2b8a6"/><stop offset="0.5" stop-color="#9c907d"/><stop offset="1" stop-color="#6a5f52"/></linearGradient><clipPath id="c5"><path d="M24.6 91.8C25.4 85.3 24.0 86.6 27.9 80.7C31.7 74.7 30.7 75.5 39.0 69.6C47.3 63.6 48.3 62.0 59.0 58.4C69.7 54.9 68.3 55.3 79.0 56.2C89.7 57.1 88.9 58.2 99.0 61.8C109.1 65.3 109.7 65.1 116.8 69.6C123.9 74.0 122.7 72.5 125.7 78.4C128.6 84.4 127.9 84.7 127.9 91.8C127.9 98.9 128.0 98.6 125.7 105.1C123.3 111.6 124.3 111.2 119.0 116.2C113.7 121.3 114.0 120.1 105.7 124.0C97.4 127.9 96.8 129.8 87.9 130.7C79.0 131.6 82.4 129.7 72.3 127.3C62.3 125.0 60.8 125.3 50.1 121.8C39.4 118.2 39.1 118.4 32.3 114.0C25.5 109.6 26.6 111.0 24.6 105.1C22.5 99.2 23.7 98.3 24.6 91.8Z"/></clipPath></defs><rect x="0" y="0" width="150" height="150" fill="url(#tbg)"/><ellipse cx="40.4" cy="116.5" rx="30.7" ry="8.9" fill="#919192" filter="url(#blur2)"/><ellipse cx="76" cy="129" rx="49" ry="3.5" fill="#4a4a4c" opacity="0.5" filter="url(#blur3)"/><g filter="url(#tex)"><g clip-path="url(#c5)"><path d="M24.6 91.8C25.4 85.3 24.0 86.6 27.9 80.7C31.7 74.7 30.7 75.5 39.0 69.6C47.3 63.6 48.3 62.0 59.0 58.4C69.7 54.9 68.3 55.3 79.0 56.2C89.7 57.1 88.9 58.2 99.0 61.8C109.1 65.3 109.7 65.1 116.8 69.6C123.9 74.0 122.7 72.5 125.7 78.4C128.6 84.4 127.9 84.7 127.9 91.8C127.9 98.9 128.0 98.6 125.7 105.1C123.3 111.6 124.3 111.2 119.0 116.2C113.7 121.3 114.0 120.1 105.7 124.0C97.4 127.9 96.8 129.8 87.9 130.7C79.0 131.6 82.4 129.7 72.3 127.3C62.3 125.0 60.8 125.3 50.1 121.8C39.4 118.2 39.1 118.4 32.3 114.0C25.5 109.6 26.6 111.0 24.6 105.1C22.5 99.2 23.7 98.3 24.6 91.8Z" fill="url(#g5)"/><path d="M27.9 80.7C29.7 77.1 32.8 74.0 39.0 69.6C45.2 65.1 51.0 61.1 59.0 58.4C67.0 55.8 71.0 55.6 79.0 56.2C87.0 56.9 91.4 59.1 99.0 61.8C106.6 64.4 117.7 65.3 116.8 69.6C115.9 73.8 105.7 78.9 94.6 82.9C83.4 86.9 74.1 88.7 61.2 89.6C48.3 90.4 36.8 89.1 30.1 87.3C23.4 85.6 26.1 84.2 27.9 80.7Z" fill="#c2b8a6" opacity="0.61" filter="url(#blur2)"/><path d="M84.6 130.7C80.6 127.8 84.1 118.7 86.1 109.6C88.1 100.4 88.4 92.9 94.6 85.1C100.7 77.3 110.6 72.0 116.8 70.7C123.0 69.3 123.4 74.2 125.7 78.4C127.9 82.7 127.9 86.4 127.9 91.8C127.9 97.1 127.4 100.2 125.7 105.1C123.9 110.0 123.0 112.4 119.0 116.2C115.0 120.0 112.6 121.1 105.7 124.0C98.8 126.9 88.5 133.6 84.6 130.7Z" fill="#6a5f52" opacity="0.68" filter="url(#blur2)"/><path d="M24.6 102.9C28.1 100.4 37.9 99.8 50.1 101.8C62.3 103.8 78.8 107.1 85.7 112.9C92.6 118.7 87.2 127.8 84.6 130.7C81.9 133.6 79.2 129.1 72.3 127.3C65.4 125.6 58.1 124.4 50.1 121.8C42.1 119.1 37.4 117.8 32.3 114.0C27.2 110.2 21.0 105.3 24.6 102.9Z" fill="#6a5f52" opacity="0.81" filter="url(#blur2)"/><path d="M61.2 60.7C65.2 57.6 76.3 55.8 83.4 58.4C90.6 61.1 97.7 69.1 96.8 74.0C95.9 78.9 85.7 82.9 79.0 82.9C72.3 82.9 67.0 78.4 63.4 74.0C59.9 69.6 57.2 63.8 61.2 60.7Z" fill="#8a8a55" opacity="0.21" filter="url(#blur2)"/><ellipse cx="76" cy="134" rx="62" ry="10" fill="#2a2620" opacity="0.5" filter="url(#blur1)"/></g></g></svg>
<div class="t lbl" style="left:661px;top:460px;width:150px">Rock s3 02</div>
<svg style="left:816px;top:322px;overflow:hidden" width="150" height="150" viewBox="0 0 150 150"><defs><linearGradient id="g6" gradientUnits="userSpaceOnUse" x1="58" y1="55" x2="88" y2="131"><stop offset="0" stop-color="#b8a98a"/><stop offset="0.5" stop-color="#968668"/><stop offset="1" stop-color="#5f5340"/></linearGradient><clipPath id="c6"><path d="M16.2 96.2C17.1 88.5 16.5 86.7 20.7 78.4C24.8 70.1 24.7 70.7 31.8 65.1C38.9 59.5 36.7 60.0 47.3 57.3C58.0 54.7 58.1 55.7 71.8 55.1C85.4 54.5 86.0 53.6 98.4 55.1C110.9 56.6 109.6 56.2 118.4 60.7C127.3 65.1 127.0 64.7 131.8 71.8C136.5 78.9 135.6 79.0 136.2 87.3C136.8 95.6 137.0 95.2 134.0 102.9C131.0 110.6 131.6 110.3 125.1 116.2C118.6 122.1 119.6 121.3 109.6 125.1C99.5 129.0 99.2 129.8 87.3 130.7C75.5 131.6 77.0 130.2 65.1 128.4C53.3 126.7 53.6 127.3 42.9 124.0C32.2 120.7 31.9 120.7 25.1 116.2C18.3 111.8 19.7 112.7 17.3 107.3C15.0 102.0 15.3 103.9 16.2 96.2Z"/></clipPath></defs><rect x="0" y="0" width="150" height="150" fill="url(#tbg)"/><ellipse cx="35.7" cy="116.3" rx="34.6" ry="9.1" fill="#919192" filter="url(#blur2)"/><ellipse cx="76" cy="129" rx="56" ry="3.5" fill="#4a4a4c" opacity="0.5" filter="url(#blur3)"/><g filter="url(#tex)"><g clip-path="url(#c6)"><path d="M16.2 96.2C17.1 88.5 16.5 86.7 20.7 78.4C24.8 70.1 24.7 70.7 31.8 65.1C38.9 59.5 36.7 60.0 47.3 57.3C58.0 54.7 58.1 55.7 71.8 55.1C85.4 54.5 86.0 53.6 98.4 55.1C110.9 56.6 109.6 56.2 118.4 60.7C127.3 65.1 127.0 64.7 131.8 71.8C136.5 78.9 135.6 79.0 136.2 87.3C136.8 95.6 137.0 95.2 134.0 102.9C131.0 110.6 131.6 110.3 125.1 116.2C118.6 122.1 119.6 121.3 109.6 125.1C99.5 129.0 99.2 129.8 87.3 130.7C75.5 131.6 77.0 130.2 65.1 128.4C53.3 126.7 53.6 127.3 42.9 124.0C32.2 120.7 31.9 120.7 25.1 116.2C18.3 111.8 19.7 112.7 17.3 107.3C15.0 102.0 15.3 103.9 16.2 96.2Z" fill="url(#g6)"/><path d="M20.7 78.4C17.1 74.9 26.4 69.3 31.8 65.1C37.1 60.9 34.0 59.3 47.3 57.3C60.7 55.3 84.2 54.4 98.4 55.1C112.7 55.8 112.7 56.9 118.4 60.7C124.2 64.4 132.2 70.4 127.3 74.0C122.4 77.6 109.6 76.7 94.0 78.4C78.4 80.2 64.2 82.9 49.6 82.9C34.9 82.9 24.2 82.0 20.7 78.4Z" fill="#b8a98a" opacity="0.54" filter="url(#blur2)"/><path d="M16.2 96.2C20.4 96.7 28.2 106.0 38.4 109.6C48.7 113.1 57.6 109.8 67.3 114.0C77.1 118.2 87.8 127.8 87.3 130.7C86.9 133.6 74.0 129.8 65.1 128.4C56.2 127.1 50.9 126.4 42.9 124.0C34.9 121.6 30.2 119.6 25.1 116.2C20.0 112.9 19.1 111.3 17.3 107.3C15.6 103.3 12.0 95.8 16.2 96.2Z" fill="#5f5340" opacity="0.68" filter="url(#blur2)"/><path d="M69.6 94.0C70.9 91.8 81.1 89.1 89.6 89.6C98.0 90.0 108.7 93.6 111.8 96.2C114.9 98.9 110.9 102.0 105.1 102.9C99.3 103.8 90.0 102.4 82.9 100.7C75.8 98.9 68.2 96.2 69.6 94.0Z" fill="#5f5340" opacity="0.74" filter="url(#blur2)"/><path d="M67.3 114.0C71.8 109.3 96.2 109.6 109.6 107.3C122.9 105.1 130.9 101.1 134.0 102.9C137.1 104.7 130.0 111.8 125.1 116.2C120.2 120.7 117.1 122.2 109.6 125.1C102.0 128.0 95.8 132.9 87.3 130.7C78.9 128.4 62.9 118.7 67.3 114.0Z" fill="#5f5340" opacity="0.47" filter="url(#blur2)"/><ellipse cx="76" cy="134" rx="72" ry="10" fill="#2a2620" opacity="0.5" filter="url(#blur1)"/></g></g></svg>
<div class="t lbl" style="left:816px;top:460px;width:150px">Rock s3 03</div>
<svg style="left:971px;top:322px;overflow:hidden" width="150" height="150" viewBox="0 0 150 150"><defs><linearGradient id="g7" gradientUnits="userSpaceOnUse" x1="59" y1="54" x2="85" y2="127"><stop offset="0" stop-color="#c7ae90"/><stop offset="0.5" stop-color="#a78d6f"/><stop offset="1" stop-color="#74604a"/></linearGradient><clipPath id="c7"><path d="M21.2 98.4C22.1 91.3 20.9 90.6 25.7 82.9C30.4 75.2 30.7 76.4 39.0 69.6C47.3 62.7 48.5 61.4 56.8 57.3C65.1 53.3 63.0 54.1 70.1 54.4C77.2 54.7 75.1 54.4 83.4 58.4C91.7 62.5 91.7 63.6 101.2 69.6C110.7 75.5 112.2 74.1 119.0 80.7C125.8 87.2 124.4 86.9 126.8 94.0C129.1 101.1 129.4 100.8 127.9 107.3C126.4 113.9 128.3 113.7 121.2 118.4C114.1 123.2 114.3 122.7 101.2 125.1C88.2 127.5 86.6 127.3 72.3 127.3C58.1 127.3 59.1 127.5 47.9 125.1C36.6 122.7 36.9 122.6 30.1 118.4C23.3 114.3 24.7 114.9 22.3 109.6C20.0 104.2 20.3 105.6 21.2 98.4Z"/></clipPath></defs><rect x="0" y="0" width="150" height="150" fill="url(#tbg)"/><ellipse cx="37.9" cy="113.5" rx="31.3" ry="8.7" fill="#919192" filter="url(#blur2)"/><ellipse cx="75" cy="125" rx="50" ry="3.5" fill="#4a4a4c" opacity="0.5" filter="url(#blur3)"/><g filter="url(#tex)"><g clip-path="url(#c7)"><path d="M21.2 98.4C22.1 91.3 20.9 90.6 25.7 82.9C30.4 75.2 30.7 76.4 39.0 69.6C47.3 62.7 48.5 61.4 56.8 57.3C65.1 53.3 63.0 54.1 70.1 54.4C77.2 54.7 75.1 54.4 83.4 58.4C91.7 62.5 91.7 63.6 101.2 69.6C110.7 75.5 112.2 74.1 119.0 80.7C125.8 87.2 124.4 86.9 126.8 94.0C129.1 101.1 129.4 100.8 127.9 107.3C126.4 113.9 128.3 113.7 121.2 118.4C114.1 123.2 114.3 122.7 101.2 125.1C88.2 127.5 86.6 127.3 72.3 127.3C58.1 127.3 59.1 127.5 47.9 125.1C36.6 122.7 36.9 122.6 30.1 118.4C23.3 114.3 24.7 114.9 22.3 109.6C20.0 104.2 20.3 105.6 21.2 98.4Z" fill="url(#g7)"/><path d="M39.0 69.6C41.7 64.4 50.6 60.4 56.8 57.3C63.0 54.3 64.8 54.2 70.1 54.4C75.4 54.7 73.7 53.2 83.4 58.4C93.2 63.7 116.8 75.3 119.0 80.7C121.2 86.0 106.1 84.7 94.6 85.1C83.0 85.6 71.4 83.3 61.2 82.9C51.0 82.4 47.9 85.6 43.4 82.9C39.0 80.2 36.3 74.7 39.0 69.6Z" fill="#c7ae90" opacity="0.54" filter="url(#blur2)"/><path d="M21.2 98.4C22.3 93.1 24.3 86.7 27.9 82.9C31.4 79.1 35.0 75.6 39.0 79.6C43.0 83.6 46.3 94.0 47.9 102.9C49.4 111.8 50.3 120.9 46.8 124.0C43.2 127.1 35.0 121.3 30.1 118.4C25.2 115.6 24.1 113.6 22.3 109.6C20.6 105.6 20.1 103.8 21.2 98.4Z" fill="#74604a" opacity="0.54" filter="url(#blur2)"/><path d="M47.9 124.0C50.1 122.7 67.9 123.6 83.4 120.7C99.0 117.8 118.1 110.0 125.7 109.6C133.2 109.1 126.1 115.3 121.2 118.4C116.3 121.6 111.0 123.3 101.2 125.1C91.4 126.9 83.0 127.6 72.3 127.3C61.7 127.1 45.7 125.3 47.9 124.0Z" fill="#74604a" opacity="0.61" filter="url(#blur2)"/><ellipse cx="75" cy="131" rx="64" ry="9" fill="#2a2620" opacity="0.5" filter="url(#blur1)"/></g></g></svg>
<div class="t lbl" style="left:971px;top:460px;width:150px">Rock s3 04</div>
<svg style="left:506px;top:477px;overflow:hidden" width="150" height="150" viewBox="0 0 150 150"><defs><linearGradient id="g8" gradientUnits="userSpaceOnUse" x1="67" y1="16" x2="85" y2="132"><stop offset="0" stop-color="#b2a982"/><stop offset="0.5" stop-color="#908761"/><stop offset="1" stop-color="#5d5639"/></linearGradient><clipPath id="c8"><path d="M41.4 83.9C41.4 69.7 40.5 72.0 42.9 60.2C45.3 48.3 46.3 48.9 50.3 39.4C54.2 30.0 52.2 31.0 57.7 24.6C63.2 18.3 65.1 17.3 71.0 15.7C77.0 14.2 75.2 12.4 79.9 18.7C84.7 25.0 84.1 27.6 88.8 39.4C93.6 51.3 92.6 48.1 97.7 63.1C102.8 78.2 103.7 79.9 108.1 95.7C112.4 111.5 114.0 113.7 114.0 122.4C114.0 131.1 114.8 125.8 108.1 128.3C101.4 130.9 99.5 131.5 88.8 131.9C78.1 132.3 78.3 131.9 68.1 129.8C57.8 127.7 57.0 128.2 50.3 123.9C43.6 119.5 45.3 124.2 42.9 113.5C40.5 102.9 41.4 98.1 41.4 83.9Z"/></clipPath></defs><rect x="0" y="0" width="150" height="150" fill="url(#tbg)"/><ellipse cx="46.1" cy="109.8" rx="27.9" ry="13.9" fill="#919192" filter="url(#blur2)"/><ellipse cx="78" cy="130" rx="34" ry="3.5" fill="#4a4a4c" opacity="0.5" filter="url(#blur3)"/><g filter="url(#tex)"><g clip-path="url(#c8)"><path d="M41.4 83.9C41.4 69.7 40.5 72.0 42.9 60.2C45.3 48.3 46.3 48.9 50.3 39.4C54.2 30.0 52.2 31.0 57.7 24.6C63.2 18.3 65.1 17.3 71.0 15.7C77.0 14.2 75.2 12.4 79.9 18.7C84.7 25.0 84.1 27.6 88.8 39.4C93.6 51.3 92.6 48.1 97.7 63.1C102.8 78.2 103.7 79.9 108.1 95.7C112.4 111.5 114.0 113.7 114.0 122.4C114.0 131.1 114.8 125.8 108.1 128.3C101.4 130.9 99.5 131.5 88.8 131.9C78.1 132.3 78.3 131.9 68.1 129.8C57.8 127.7 57.0 128.2 50.3 123.9C43.6 119.5 45.3 124.2 42.9 113.5C40.5 102.9 41.4 98.1 41.4 83.9Z" fill="url(#g8)"/><path d="M42.9 60.2C44.7 51.3 47.3 46.6 50.3 39.4C53.3 32.3 53.6 29.4 57.7 24.6C61.9 19.9 68.1 9.8 71.0 15.7C74.0 21.7 73.1 38.9 72.5 54.3C71.9 69.7 70.1 78.6 68.1 92.8C66.0 107.0 65.7 119.1 62.1 125.4C58.6 131.6 54.1 126.3 50.3 123.9C46.4 121.5 44.7 121.5 42.9 113.5C41.1 105.5 41.4 94.6 41.4 83.9C41.4 73.2 41.1 69.1 42.9 60.2Z" fill="#b2a982" opacity="0.41" filter="url(#blur2)"/><path d="M79.9 18.7C79.9 9.8 83.2 24.0 88.8 39.4C94.4 54.9 103.0 79.1 108.1 95.7C113.1 112.3 114.0 115.9 114.0 122.4C114.0 128.9 112.5 126.6 108.1 128.3C103.6 130.1 95.6 140.2 91.8 131.3C87.9 122.4 91.2 106.4 88.8 83.9C86.4 61.4 79.9 27.6 79.9 18.7Z" fill="#5d5639" opacity="0.54" filter="url(#blur2)"/><path d="M56.2 39.4C56.8 28.2 66.9 21.7 71.0 27.6C75.2 33.5 77.6 57.8 77.0 69.1C76.4 80.3 72.2 89.8 68.1 83.9C63.9 78.0 55.6 50.7 56.2 39.4Z" fill="#7d8440" opacity="0.24" filter="url(#blur2)"/><ellipse cx="78" cy="138" rx="44" ry="15" fill="#2a2620" opacity="0.5" filter="url(#blur1)"/></g></g></svg>
<div class="t lbl" style="left:506px;top:615px;width:150px">Rock s3 05</div>
<svg style="left:661px;top:477px;overflow:hidden" width="150" height="150" viewBox="0 0 150 150"><defs><linearGradient id="g9" gradientUnits="userSpaceOnUse" x1="58" y1="56" x2="88" y2="130"><stop offset="0" stop-color="#a99c83"/><stop offset="0.5" stop-color="#867961"/><stop offset="1" stop-color="#54493a"/></linearGradient><clipPath id="c9"><path d="M16.8 98.7C15.6 90.4 15.1 89.6 18.3 80.9C21.4 72.2 21.1 72.3 28.6 66.1C36.1 59.9 33.8 60.6 46.4 57.8C59.0 55.0 60.2 55.9 76.0 55.7C91.8 55.6 92.2 54.5 105.7 57.2C119.1 60.0 118.5 59.8 126.4 66.1C134.3 72.4 132.9 72.2 135.3 80.9C137.7 89.6 137.7 90.0 135.3 98.7C132.9 107.4 132.7 106.8 126.4 113.5C120.1 120.2 121.9 119.5 111.6 123.9C101.3 128.2 100.5 128.6 87.9 129.8C75.2 131.0 76.8 130.7 64.2 128.3C51.5 126.0 51.5 125.3 40.5 120.9C29.4 116.6 29.0 118.0 22.7 112.0C16.4 106.1 18.0 107.0 16.8 98.7Z"/></clipPath></defs><rect x="0" y="0" width="150" height="150" fill="url(#tbg)"/><ellipse cx="36.0" cy="115.7" rx="34.1" ry="8.9" fill="#919192" filter="url(#blur2)"/><ellipse cx="76" cy="128" rx="56" ry="3.5" fill="#4a4a4c" opacity="0.5" filter="url(#blur3)"/><g filter="url(#tex)"><g clip-path="url(#c9)"><path d="M16.8 98.7C15.6 90.4 15.1 89.6 18.3 80.9C21.4 72.2 21.1 72.3 28.6 66.1C36.1 59.9 33.8 60.6 46.4 57.8C59.0 55.0 60.2 55.9 76.0 55.7C91.8 55.6 92.2 54.5 105.7 57.2C119.1 60.0 118.5 59.8 126.4 66.1C134.3 72.4 132.9 72.2 135.3 80.9C137.7 89.6 137.7 90.0 135.3 98.7C132.9 107.4 132.7 106.8 126.4 113.5C120.1 120.2 121.9 119.5 111.6 123.9C101.3 128.2 100.5 128.6 87.9 129.8C75.2 131.0 76.8 130.7 64.2 128.3C51.5 126.0 51.5 125.3 40.5 120.9C29.4 116.6 29.0 118.0 22.7 112.0C16.4 106.1 18.0 107.0 16.8 98.7Z" fill="url(#g9)"/><path d="M18.3 80.9C14.7 76.8 23.0 70.7 28.6 66.1C34.3 61.5 31.0 59.6 46.4 57.8C61.8 56.0 89.7 55.6 105.7 57.2C121.7 58.9 121.1 61.4 126.4 66.1C131.7 70.9 139.4 77.4 132.3 80.9C125.2 84.5 108.0 82.7 90.9 83.9C73.7 85.1 60.9 87.4 46.4 86.9C31.9 86.3 21.8 85.1 18.3 80.9Z" fill="#a99c83" opacity="0.47" filter="url(#blur2)"/><path d="M16.8 98.7C21.5 98.4 34.6 107.0 46.4 110.6C58.3 114.1 58.3 118.9 76.0 116.5C93.8 114.1 125.2 99.3 135.3 98.7C145.4 98.1 131.1 108.5 126.4 113.5C121.7 118.6 119.3 120.6 111.6 123.9C103.9 127.1 97.4 128.9 87.9 129.8C78.4 130.7 73.7 130.1 64.2 128.3C54.7 126.6 48.8 124.2 40.5 120.9C32.2 117.7 27.4 116.5 22.7 112.0C18.0 107.6 12.0 99.0 16.8 98.7Z" fill="#54493a" opacity="0.74" filter="url(#blur2)"/><path d="M64.2 92.8C65.4 89.8 79.6 88.6 87.9 89.8C96.2 91.0 106.9 95.7 105.7 98.7C104.5 101.7 90.3 105.8 82.0 104.6C73.7 103.4 63.0 95.7 64.2 92.8Z" fill="#54493a" opacity="0.68" filter="url(#blur2)"/><ellipse cx="76" cy="134" rx="71" ry="10" fill="#2a2620" opacity="0.5" filter="url(#blur1)"/></g></g></svg>
<div class="t lbl" style="left:661px;top:615px;width:150px">Rock s3 06</div>
<svg style="left:816px;top:477px;overflow:hidden" width="150" height="150" viewBox="0 0 150 150"><defs><linearGradient id="g10" gradientUnits="userSpaceOnUse" x1="65" y1="22" x2="85" y2="131"><stop offset="0" stop-color="#cdc6b2"/><stop offset="0.5" stop-color="#a9a18b"/><stop offset="1" stop-color="#726b59"/></linearGradient><clipPath id="c10"><path d="M38.4 98.7C38.4 88.4 39.7 89.0 42.9 78.0C46.0 66.9 46.3 68.3 50.3 57.2C54.2 46.2 53.0 46.0 57.7 36.5C62.4 27.0 62.1 25.2 68.1 21.7C74.0 18.1 73.6 19.2 79.9 23.1C86.2 27.1 85.5 28.2 91.8 36.5C98.1 44.8 98.5 42.4 103.6 54.3C108.8 66.1 107.9 67.5 111.0 80.9C114.2 94.4 115.1 94.4 115.5 104.6C115.9 114.9 117.3 113.1 112.5 119.4C107.8 125.8 107.2 125.3 97.7 128.3C88.2 131.3 88.0 130.7 77.0 130.7C65.9 130.7 65.3 132.1 56.2 128.3C47.1 124.5 47.6 124.4 42.9 116.5C38.1 108.6 38.4 109.0 38.4 98.7Z"/></clipPath></defs><rect x="0" y="0" width="150" height="150" fill="url(#tbg)"/><ellipse cx="44.9" cy="110.0" rx="28.2" ry="13.1" fill="#919192" filter="url(#blur2)"/><ellipse cx="77" cy="129" rx="36" ry="3.5" fill="#4a4a4c" opacity="0.5" filter="url(#blur3)"/><g filter="url(#tex)"><g clip-path="url(#c10)"><path d="M38.4 98.7C38.4 88.4 39.7 89.0 42.9 78.0C46.0 66.9 46.3 68.3 50.3 57.2C54.2 46.2 53.0 46.0 57.7 36.5C62.4 27.0 62.1 25.2 68.1 21.7C74.0 18.1 73.6 19.2 79.9 23.1C86.2 27.1 85.5 28.2 91.8 36.5C98.1 44.8 98.5 42.4 103.6 54.3C108.8 66.1 107.9 67.5 111.0 80.9C114.2 94.4 115.1 94.4 115.5 104.6C115.9 114.9 117.3 113.1 112.5 119.4C107.8 125.8 107.2 125.3 97.7 128.3C88.2 131.3 88.0 130.7 77.0 130.7C65.9 130.7 65.3 132.1 56.2 128.3C47.1 124.5 47.6 124.4 42.9 116.5C38.1 108.6 38.4 109.0 38.4 98.7Z" fill="url(#g10)"/><path d="M50.3 57.2C52.4 46.0 54.1 43.6 57.7 36.5C61.3 29.4 63.9 21.1 68.1 21.7C72.2 22.3 76.1 31.1 78.4 39.4C80.8 47.7 81.1 54.3 79.9 63.1C78.7 72.0 75.5 75.0 72.5 83.9C69.6 92.8 68.1 100.5 65.1 107.6C62.1 114.7 61.3 122.4 57.7 119.4C54.1 116.5 48.8 105.2 47.3 92.8C45.9 80.3 48.2 68.5 50.3 57.2Z" fill="#726b59" opacity="0.54" filter="url(#blur2)"/><path d="M79.9 23.1C81.7 18.4 87.0 30.3 91.8 36.5C96.5 42.7 99.8 45.4 103.6 54.3C107.5 63.1 112.8 75.0 111.0 80.9C109.3 86.9 100.4 88.0 94.7 83.9C89.1 79.7 85.9 72.3 82.9 60.2C79.9 48.0 78.1 27.9 79.9 23.1Z" fill="#cdc6b2" opacity="0.61" filter="url(#blur2)"/><path d="M38.4 98.7C41.7 99.9 50.3 117.1 59.2 122.4C68.1 127.7 71.6 128.9 82.9 125.4C94.1 121.8 109.6 105.8 115.5 104.6C121.4 103.4 116.1 114.7 112.5 119.4C109.0 124.2 104.8 126.1 97.7 128.3C90.6 130.6 85.3 130.7 77.0 130.7C68.7 130.7 63.0 131.2 56.2 128.3C49.4 125.5 46.4 122.4 42.9 116.5C39.3 110.6 35.2 97.5 38.4 98.7Z" fill="#726b59" opacity="0.47" filter="url(#blur2)"/><ellipse cx="77" cy="136" rx="46" ry="14" fill="#2a2620" opacity="0.5" filter="url(#blur1)"/></g></g></svg>
<div class="t lbl" style="left:816px;top:615px;width:150px">Rock s3 07</div>
<svg style="left:971px;top:477px;overflow:hidden" width="150" height="150" viewBox="0 0 150 150"><defs><linearGradient id="g11" gradientUnits="userSpaceOnUse" x1="70" y1="31" x2="92" y2="133"><stop offset="0" stop-color="#a39c7b"/><stop offset="0.5" stop-color="#807959"/><stop offset="1" stop-color="#4f4a34"/></linearGradient><clipPath id="c11"><path d="M43.4 52.8C46.4 46.5 43.0 45.2 50.9 39.4C58.8 33.7 63.2 32.7 73.1 31.1C83.0 29.6 80.8 29.7 87.9 33.5C95.0 37.3 92.6 37.1 99.7 45.4C106.9 53.7 107.8 55.1 114.6 64.6C121.3 74.1 121.8 71.8 124.9 80.9C128.1 90.0 126.6 88.4 126.4 98.7C126.2 109.0 127.6 111.9 124.0 119.4C120.5 127.0 121.9 123.3 113.1 126.9C104.2 130.4 100.7 131.4 90.9 132.8C81.0 134.1 83.9 134.3 76.0 131.9C68.1 129.5 67.9 128.4 61.2 123.9C54.5 119.4 55.6 121.7 50.9 115.0C46.1 108.3 46.2 108.6 43.4 98.7C40.7 88.8 41.4 87.4 40.5 78.0C39.5 68.5 39.1 69.9 39.9 63.1C40.7 56.4 40.5 59.1 43.4 52.8Z"/></clipPath></defs><rect x="0" y="0" width="150" height="150" fill="url(#tbg)"/><ellipse cx="49.2" cy="113.5" rx="29.6" ry="12.2" fill="#919192" filter="url(#blur2)"/><ellipse cx="83" cy="131" rx="41" ry="3.5" fill="#4a4a4c" opacity="0.5" filter="url(#blur3)"/><g filter="url(#tex)"><g clip-path="url(#c11)"><path d="M43.4 52.8C46.4 46.5 43.0 45.2 50.9 39.4C58.8 33.7 63.2 32.7 73.1 31.1C83.0 29.6 80.8 29.7 87.9 33.5C95.0 37.3 92.6 37.1 99.7 45.4C106.9 53.7 107.8 55.1 114.6 64.6C121.3 74.1 121.8 71.8 124.9 80.9C128.1 90.0 126.6 88.4 126.4 98.7C126.2 109.0 127.6 111.9 124.0 119.4C120.5 127.0 121.9 123.3 113.1 126.9C104.2 130.4 100.7 131.4 90.9 132.8C81.0 134.1 83.9 134.3 76.0 131.9C68.1 129.5 67.9 128.4 61.2 123.9C54.5 119.4 55.6 121.7 50.9 115.0C46.1 108.3 46.2 108.6 43.4 98.7C40.7 88.8 41.4 87.4 40.5 78.0C39.5 68.5 39.1 69.9 39.9 63.1C40.7 56.4 40.5 59.1 43.4 52.8Z" fill="url(#g11)"/><path d="M40.5 54.3C41.1 46.6 42.9 43.9 49.4 39.4C55.9 35.0 64.8 32.6 73.1 32.0C81.4 31.4 84.3 32.0 90.9 36.5C97.4 40.9 99.1 46.6 105.7 54.3C112.2 62.0 128.2 72.0 123.4 75.0C118.7 78.0 97.4 68.5 82.0 69.1C66.6 69.7 54.7 80.9 46.4 78.0C38.1 75.0 39.9 62.0 40.5 54.3Z" fill="#8d9050" opacity="0.35" filter="url(#blur2)"/><path d="M40.5 83.9C40.5 77.4 44.0 72.0 46.4 78.0C48.8 83.9 48.8 104.0 52.3 113.5C55.9 123.0 65.4 126.0 64.2 125.4C63.0 124.8 51.1 118.9 46.4 110.6C41.7 102.3 40.5 90.4 40.5 83.9Z" fill="#4f4a34" opacity="0.54" filter="url(#blur2)"/><path d="M64.2 125.4C68.9 122.7 93.2 125.4 105.7 119.4C118.1 113.5 122.9 95.7 126.4 95.7C130.0 95.7 127.6 112.9 123.4 119.4C119.3 126.0 114.0 125.7 105.7 128.3C97.4 131.0 90.3 133.4 82.0 132.8C73.7 132.2 59.4 128.0 64.2 125.4Z" fill="#4f4a34" opacity="0.61" filter="url(#blur2)"/><ellipse cx="83" cy="138" rx="52" ry="13" fill="#2a2620" opacity="0.5" filter="url(#blur1)"/></g></g></svg>
<div class="t lbl" style="left:971px;top:615px;width:150px">Rock s3 08</div>
<svg style="left:506px;top:632px;overflow:hidden" width="150" height="150" viewBox="0 0 150 150"><defs><linearGradient id="g12" gradientUnits="userSpaceOnUse" x1="61" y1="16" x2="85" y2="132"><stop offset="0" stop-color="#c7c1aa"/><stop offset="0.5" stop-color="#a29b81"/><stop offset="1" stop-color="#6c6650"/></linearGradient><clipPath id="c12"><path d="M26.6 106.7C25.8 95.6 25.7 97.2 28.1 83.0C30.4 68.7 31.5 67.6 35.5 53.3C39.4 39.1 38.9 39.5 42.9 29.6C46.8 19.8 44.8 19.5 50.3 16.3C55.8 13.1 56.5 13.4 63.6 17.8C70.7 22.1 68.7 24.7 77.0 32.6C85.3 40.5 86.0 39.5 94.7 47.4C103.4 55.3 102.4 55.1 109.6 62.2C116.7 69.3 117.5 67.0 121.4 74.1C125.4 81.2 125.2 80.2 124.4 88.9C123.6 97.6 124.0 98.8 118.4 106.7C112.9 114.6 114.7 113.0 103.6 118.5C92.6 124.0 92.0 123.9 77.0 127.4C62.0 131.0 59.6 132.6 47.3 131.9C35.1 131.1 36.6 131.2 31.0 124.4C25.5 117.7 27.4 117.7 26.6 106.7Z"/></clipPath></defs><rect x="0" y="0" width="150" height="150" fill="url(#tbg)"/><ellipse cx="37.0" cy="109.9" rx="33.6" ry="13.9" fill="#919192" filter="url(#blur2)"/><ellipse cx="75" cy="130" rx="46" ry="3.5" fill="#4a4a4c" opacity="0.5" filter="url(#blur3)"/><g filter="url(#tex)"><g clip-path="url(#c12)"><path d="M26.6 106.7C25.8 95.6 25.7 97.2 28.1 83.0C30.4 68.7 31.5 67.6 35.5 53.3C39.4 39.1 38.9 39.5 42.9 29.6C46.8 19.8 44.8 19.5 50.3 16.3C55.8 13.1 56.5 13.4 63.6 17.8C70.7 22.1 68.7 24.7 77.0 32.6C85.3 40.5 86.0 39.5 94.7 47.4C103.4 55.3 102.4 55.1 109.6 62.2C116.7 69.3 117.5 67.0 121.4 74.1C125.4 81.2 125.2 80.2 124.4 88.9C123.6 97.6 124.0 98.8 118.4 106.7C112.9 114.6 114.7 113.0 103.6 118.5C92.6 124.0 92.0 123.9 77.0 127.4C62.0 131.0 59.6 132.6 47.3 131.9C35.1 131.1 36.6 131.2 31.0 124.4C25.5 117.7 27.4 117.7 26.6 106.7Z" fill="url(#g12)"/><path d="M35.5 53.3C38.4 42.7 39.9 37.0 42.9 29.6C45.9 22.2 48.2 12.7 50.3 16.3C52.4 19.9 53.6 32.3 53.3 47.4C53.0 62.5 50.0 75.0 48.8 91.9C47.6 108.7 50.9 125.3 47.3 131.9C43.8 138.4 35.2 129.5 31.0 124.4C26.9 119.4 27.2 115.0 26.6 106.7C26.0 98.4 26.3 93.6 28.1 83.0C29.9 72.3 32.5 64.0 35.5 53.3Z" fill="#c7c1aa" opacity="0.54" filter="url(#blur2)"/><path d="M94.7 47.4C96.5 43.3 104.2 56.9 109.6 62.2C114.9 67.6 118.4 68.7 121.4 74.1C124.4 79.4 125.0 82.4 124.4 88.9C123.8 95.4 122.6 100.7 118.4 106.7C114.3 112.6 107.2 123.3 103.6 118.5C100.1 113.8 102.4 97.2 100.7 83.0C98.9 68.7 93.0 51.6 94.7 47.4Z" fill="#6c6650" opacity="0.47" filter="url(#blur2)"/><path d="M26.6 106.7C29.9 104.9 36.1 114.4 47.3 115.6C58.6 116.7 68.7 114.4 82.9 112.6C97.1 110.8 114.3 105.5 118.4 106.7C122.6 107.9 111.9 114.4 103.6 118.5C95.3 122.7 88.2 124.7 77.0 127.4C65.7 130.1 56.5 132.4 47.3 131.9C38.1 131.3 35.2 129.5 31.0 124.4C26.9 119.4 23.3 108.4 26.6 106.7Z" fill="#6c6650" opacity="0.47" filter="url(#blur2)"/><ellipse cx="75" cy="138" rx="59" ry="15" fill="#2a2620" opacity="0.5" filter="url(#blur1)"/></g></g></svg>
<div class="t lbl" style="left:506px;top:770px;width:150px">Rock s3 09</div>
<svg style="left:661px;top:632px;overflow:hidden" width="150" height="150" viewBox="0 0 150 150"><defs><linearGradient id="g13" gradientUnits="userSpaceOnUse" x1="57" y1="17" x2="74" y2="127"><stop offset="0" stop-color="#c4c4c4"/><stop offset="0.5" stop-color="#9b9b9b"/><stop offset="1" stop-color="#666"/></linearGradient><clipPath id="c13"><path d="M33.1 83.0C33.5 71.9 32.5 73.3 36.0 62.2C39.6 51.2 40.5 51.8 46.4 41.5C52.3 31.2 51.5 30.2 58.3 23.7C65.0 17.2 64.5 17.6 71.6 17.2C78.7 16.8 79.0 14.2 84.9 22.2C90.9 30.3 90.3 32.8 93.8 47.4C97.4 62.0 96.3 62.0 98.3 77.0C100.2 92.0 101.6 92.6 101.2 103.7C100.8 114.8 101.9 112.4 96.8 118.5C91.6 124.7 91.4 124.4 82.0 126.8C72.5 129.2 71.5 129.2 61.2 127.4C51.0 125.6 50.6 126.3 43.4 120.0C36.3 113.7 37.3 113.6 34.6 103.7C31.8 93.8 32.7 94.0 33.1 83.0Z"/></clipPath></defs><rect x="0" y="0" width="150" height="150" fill="url(#tbg)"/><ellipse cx="37.4" cy="106.5" rx="26.4" ry="13.2" fill="#919192" filter="url(#blur2)"/><ellipse cx="67" cy="125" rx="32" ry="3.5" fill="#4a4a4c" opacity="0.5" filter="url(#blur3)"/><g filter="url(#tex)"><g clip-path="url(#c13)"><path d="M33.1 83.0C33.5 71.9 32.5 73.3 36.0 62.2C39.6 51.2 40.5 51.8 46.4 41.5C52.3 31.2 51.5 30.2 58.3 23.7C65.0 17.2 64.5 17.6 71.6 17.2C78.7 16.8 79.0 14.2 84.9 22.2C90.9 30.3 90.3 32.8 93.8 47.4C97.4 62.0 96.3 62.0 98.3 77.0C100.2 92.0 101.6 92.6 101.2 103.7C100.8 114.8 101.9 112.4 96.8 118.5C91.6 124.7 91.4 124.4 82.0 126.8C72.5 129.2 71.5 129.2 61.2 127.4C51.0 125.6 50.6 126.3 43.4 120.0C36.3 113.7 37.3 113.6 34.6 103.7C31.8 93.8 32.7 94.0 33.1 83.0Z" fill="url(#g13)"/><path d="M33.1 83.0C33.4 74.7 33.4 70.5 36.0 62.2C38.7 53.9 43.1 38.5 46.4 41.5C49.7 44.4 52.3 61.6 52.3 77.0C52.3 92.4 50.0 113.2 46.4 118.5C42.9 123.9 37.2 110.8 34.6 103.7C31.9 96.6 32.8 91.3 33.1 83.0Z" fill="#666" opacity="0.41" filter="url(#blur2)"/><path d="M58.3 23.7C60.9 17.7 66.3 17.5 71.6 17.2C76.9 16.9 81.1 16.2 84.9 22.2C88.8 28.3 93.2 41.2 90.9 47.4C88.5 53.6 79.6 53.3 73.1 53.3C66.6 53.3 61.2 53.3 58.3 47.4C55.3 41.5 55.6 29.7 58.3 23.7Z" fill="#c4c4c4" opacity="0.47" filter="url(#blur2)"/><path d="M34.6 103.7C38.7 102.8 50.9 115.6 64.2 115.6C77.5 115.6 94.7 103.1 101.2 103.7C107.7 104.3 100.6 113.9 96.8 118.5C92.9 123.1 89.1 125.0 82.0 126.8C74.9 128.6 68.9 128.8 61.2 127.4C53.5 126.0 48.8 124.7 43.4 120.0C38.1 115.3 30.4 104.6 34.6 103.7Z" fill="#666" opacity="0.47" filter="url(#blur2)"/><ellipse cx="67" cy="133" rx="41" ry="14" fill="#2a2620" opacity="0.5" filter="url(#blur1)"/></g></g></svg>
<div class="t lbl" style="left:661px;top:770px;width:150px">Rock s3 10</div>
<!-- mouse cursor with highlight -->
<div class="a" style="left:752px;top:446px;width:32px;height:32px;border-radius:50%;background:radial-gradient(circle,rgba(226,222,60,.55) 0,rgba(226,222,60,.42) 55%,rgba(226,222,60,0) 100%)"></div>
<svg style="left:766px;top:466px" width="13" height="20" viewBox="0 0 13 20"><path d="M0.600 0.600v15.400l3.600-3.300 2.600 6.100 2.300-1-2.600-5.900h5Z" fill="#fff" stroke="#111" stroke-width="1"/></svg>
</body>
</html>
